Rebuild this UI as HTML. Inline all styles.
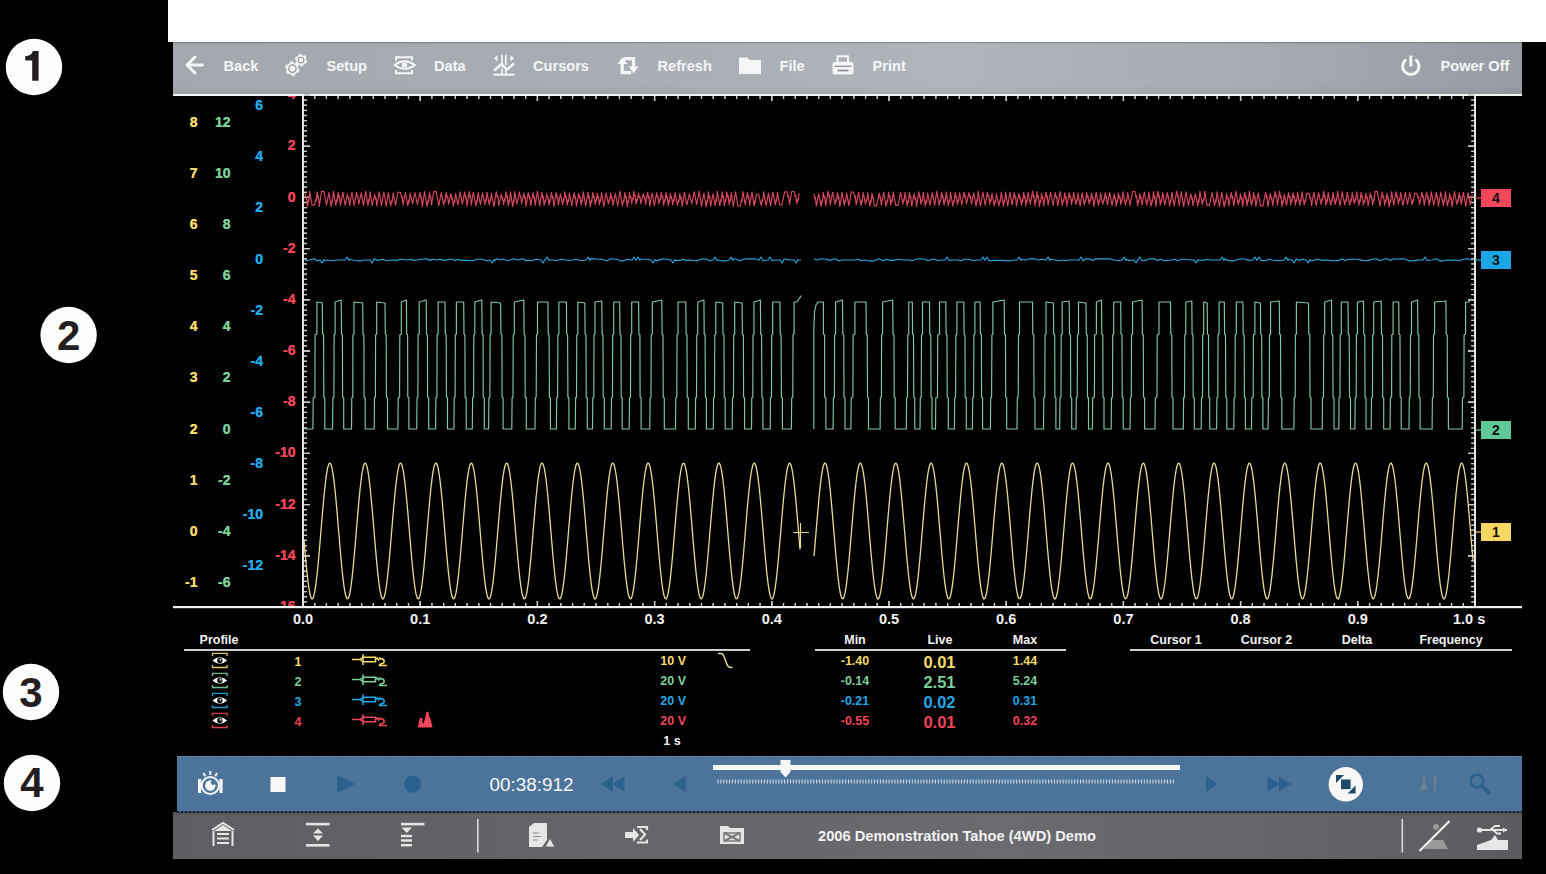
<!DOCTYPE html>
<html><head><meta charset="utf-8"><title>Scope</title>
<style>
html,body{margin:0;padding:0;background:#000;}
body{width:1546px;height:874px;overflow:hidden;position:relative;font-family:"Liberation Sans",sans-serif;}
.a{position:absolute;}
svg{position:absolute;left:0;top:0;}
</style></head><body>
<div class="a" style="left:168px;top:0;width:1378px;height:42px;background:#fff"></div>
<div class="a" style="left:173px;top:42px;width:1349px;height:52px;background:linear-gradient(180deg,rgba(40,44,50,.35) 0,rgba(40,44,50,0) 2px,rgba(40,44,50,0) 44px,rgba(40,44,50,.08) 100%),linear-gradient(90deg,#a3a8af 0%,#a8adb4 30%,#b0b5bc 58%,#a7acb3 80%,#979ca4 100%)"></div>
<div class="a" style="left:173px;top:94px;width:1349px;height:2px;background:#f4f4f4"></div>
<div class="a" style="left:177px;top:756px;width:1345px;height:56px;background:#4c7399"></div>
<div class="a" style="left:177px;top:756px;width:1345px;height:1px;background:repeating-linear-gradient(90deg,rgba(190,205,222,.4) 0 1.5px,rgba(190,205,222,0) 1.5px 3px)"></div>
<div class="a" style="left:173px;top:812px;width:1349px;height:46.5px;background:linear-gradient(180deg,rgba(20,20,30,.25) 0,rgba(20,20,30,0) 3px),linear-gradient(90deg,#5d5e62 0%,#646569 30%,#6a6b6f 62%,#636468 85%,#5a5b5f 100%)"></div>
<svg width="1546" height="874" viewBox="0 0 1546 874">
<defs><clipPath id="cp"><rect x="173" y="96" width="1349" height="510"/></clipPath><clipPath id="cp2"><rect x="304" y="96" width="1170" height="510"/></clipPath></defs><g clip-path="url(#cp)" font-family='"Liberation Sans", sans-serif'><text x="197.5" y="126.7" fill="#f6dc6a" font-size="14" font-weight="bold" text-anchor="end">8</text><text x="230.5" y="126.7" fill="#7ccf9a" font-size="14" font-weight="bold" text-anchor="end">12</text><text x="197.5" y="177.8" fill="#f6dc6a" font-size="14" font-weight="bold" text-anchor="end">7</text><text x="230.5" y="177.8" fill="#7ccf9a" font-size="14" font-weight="bold" text-anchor="end">10</text><text x="197.5" y="229" fill="#f6dc6a" font-size="14" font-weight="bold" text-anchor="end">6</text><text x="230.5" y="229" fill="#7ccf9a" font-size="14" font-weight="bold" text-anchor="end">8</text><text x="197.5" y="280.1" fill="#f6dc6a" font-size="14" font-weight="bold" text-anchor="end">5</text><text x="230.5" y="280.1" fill="#7ccf9a" font-size="14" font-weight="bold" text-anchor="end">6</text><text x="197.5" y="331.3" fill="#f6dc6a" font-size="14" font-weight="bold" text-anchor="end">4</text><text x="230.5" y="331.3" fill="#7ccf9a" font-size="14" font-weight="bold" text-anchor="end">4</text><text x="197.5" y="382.4" fill="#f6dc6a" font-size="14" font-weight="bold" text-anchor="end">3</text><text x="230.5" y="382.4" fill="#7ccf9a" font-size="14" font-weight="bold" text-anchor="end">2</text><text x="197.5" y="433.6" fill="#f6dc6a" font-size="14" font-weight="bold" text-anchor="end">2</text><text x="230.5" y="433.6" fill="#7ccf9a" font-size="14" font-weight="bold" text-anchor="end">0</text><text x="197.5" y="484.8" fill="#f6dc6a" font-size="14" font-weight="bold" text-anchor="end">1</text><text x="230.5" y="484.8" fill="#7ccf9a" font-size="14" font-weight="bold" text-anchor="end">-2</text><text x="197.5" y="535.9" fill="#f6dc6a" font-size="14" font-weight="bold" text-anchor="end">0</text><text x="230.5" y="535.9" fill="#7ccf9a" font-size="14" font-weight="bold" text-anchor="end">-4</text><text x="197.5" y="587" fill="#f6dc6a" font-size="14" font-weight="bold" text-anchor="end">-1</text><text x="230.5" y="587" fill="#7ccf9a" font-size="14" font-weight="bold" text-anchor="end">-6</text><text x="263" y="110.1" fill="#22a9e6" font-size="14" font-weight="bold" text-anchor="end">6</text><text x="263" y="161.2" fill="#22a9e6" font-size="14" font-weight="bold" text-anchor="end">4</text><text x="263" y="212.4" fill="#22a9e6" font-size="14" font-weight="bold" text-anchor="end">2</text><text x="263" y="263.5" fill="#22a9e6" font-size="14" font-weight="bold" text-anchor="end">0</text><text x="263" y="314.7" fill="#22a9e6" font-size="14" font-weight="bold" text-anchor="end">-2</text><text x="263" y="365.9" fill="#22a9e6" font-size="14" font-weight="bold" text-anchor="end">-4</text><text x="263" y="417" fill="#22a9e6" font-size="14" font-weight="bold" text-anchor="end">-6</text><text x="263" y="468.1" fill="#22a9e6" font-size="14" font-weight="bold" text-anchor="end">-8</text><text x="263" y="519.3" fill="#22a9e6" font-size="14" font-weight="bold" text-anchor="end">-10</text><text x="263" y="570.4" fill="#22a9e6" font-size="14" font-weight="bold" text-anchor="end">-12</text><text x="295.5" y="99.3" fill="#f0455a" font-size="14" font-weight="bold" text-anchor="end">4</text><text x="295.5" y="150.4" fill="#f0455a" font-size="14" font-weight="bold" text-anchor="end">2</text><text x="295.5" y="201.6" fill="#f0455a" font-size="14" font-weight="bold" text-anchor="end">0</text><text x="295.5" y="252.8" fill="#f0455a" font-size="14" font-weight="bold" text-anchor="end">-2</text><text x="295.5" y="303.9" fill="#f0455a" font-size="14" font-weight="bold" text-anchor="end">-4</text><text x="295.5" y="355.1" fill="#f0455a" font-size="14" font-weight="bold" text-anchor="end">-6</text><text x="295.5" y="406.2" fill="#f0455a" font-size="14" font-weight="bold" text-anchor="end">-8</text><text x="295.5" y="457.4" fill="#f0455a" font-size="14" font-weight="bold" text-anchor="end">-10</text><text x="295.5" y="508.5" fill="#f0455a" font-size="14" font-weight="bold" text-anchor="end">-12</text><text x="295.5" y="559.6" fill="#f0455a" font-size="14" font-weight="bold" text-anchor="end">-14</text><text x="295.5" y="610.8" fill="#f0455a" font-size="14" font-weight="bold" text-anchor="end">-16</text></g><path d="M304.0 100.12h3M304.0 105.24h3M304.0 110.36h3M304.0 115.48h3M304.0 120.60h3M304.0 125.72h3M304.0 130.84h3M304.0 135.96h3M304.0 141.08h3M304.0 151.32h3M304.0 156.44h3M304.0 161.56h3M304.0 166.68h3M304.0 171.80h3M304.0 176.92h3M304.0 182.04h3M304.0 187.16h3M304.0 192.28h3M304.0 202.52h3M304.0 207.64h3M304.0 212.76h3M304.0 217.88h3M304.0 223.00h3M304.0 228.12h3M304.0 233.24h3M304.0 238.36h3M304.0 243.48h3M304.0 253.72h3M304.0 258.84h3M304.0 263.96h3M304.0 269.08h3M304.0 274.20h3M304.0 279.32h3M304.0 284.44h3M304.0 289.56h3M304.0 294.68h3M304.0 304.92h3M304.0 310.04h3M304.0 315.16h3M304.0 320.28h3M304.0 325.40h3M304.0 330.52h3M304.0 335.64h3M304.0 340.76h3M304.0 345.88h3M304.0 356.12h3M304.0 361.24h3M304.0 366.36h3M304.0 371.48h3M304.0 376.60h3M304.0 381.72h3M304.0 386.84h3M304.0 391.96h3M304.0 397.08h3M304.0 407.32h3M304.0 412.44h3M304.0 417.56h3M304.0 422.68h3M304.0 427.80h3M304.0 432.92h3M304.0 438.04h3M304.0 443.16h3M304.0 448.28h3M304.0 458.52h3M304.0 463.64h3M304.0 468.76h3M304.0 473.88h3M304.0 479.00h3M304.0 484.12h3M304.0 489.24h3M304.0 494.36h3M304.0 499.48h3M304.0 509.72h3M304.0 514.84h3M304.0 519.96h3M304.0 525.08h3M304.0 530.20h3M304.0 535.32h3M304.0 540.44h3M304.0 545.56h3M304.0 550.68h3M304.0 560.92h3M304.0 566.04h3M304.0 571.16h3M304.0 576.28h3M304.0 581.40h3M304.0 586.52h3M304.0 591.64h3M304.0 596.76h3M304.0 601.88h3M314.72 96.0v3M314.72 606.0v-3M326.44 96.0v3M326.44 606.0v-3M338.16 96.0v3M338.16 606.0v-3M349.88 96.0v3M349.88 606.0v-3M361.60 96.0v3M361.60 606.0v-3M373.32 96.0v3M373.32 606.0v-3M385.04 96.0v3M385.04 606.0v-3M396.76 96.0v3M396.76 606.0v-3M408.48 96.0v3M408.48 606.0v-3M431.92 96.0v3M431.92 606.0v-3M443.64 96.0v3M443.64 606.0v-3M455.36 96.0v3M455.36 606.0v-3M467.08 96.0v3M467.08 606.0v-3M478.80 96.0v3M478.80 606.0v-3M490.52 96.0v3M490.52 606.0v-3M502.24 96.0v3M502.24 606.0v-3M513.96 96.0v3M513.96 606.0v-3M525.68 96.0v3M525.68 606.0v-3M549.12 96.0v3M549.12 606.0v-3M560.84 96.0v3M560.84 606.0v-3M572.56 96.0v3M572.56 606.0v-3M584.28 96.0v3M584.28 606.0v-3M596.00 96.0v3M596.00 606.0v-3M607.72 96.0v3M607.72 606.0v-3M619.44 96.0v3M619.44 606.0v-3M631.16 96.0v3M631.16 606.0v-3M642.88 96.0v3M642.88 606.0v-3M666.32 96.0v3M666.32 606.0v-3M678.04 96.0v3M678.04 606.0v-3M689.76 96.0v3M689.76 606.0v-3M701.48 96.0v3M701.48 606.0v-3M713.20 96.0v3M713.20 606.0v-3M724.92 96.0v3M724.92 606.0v-3M736.64 96.0v3M736.64 606.0v-3M748.36 96.0v3M748.36 606.0v-3M760.08 96.0v3M760.08 606.0v-3M783.52 96.0v3M783.52 606.0v-3M795.24 96.0v3M795.24 606.0v-3M806.96 96.0v3M806.96 606.0v-3M818.68 96.0v3M818.68 606.0v-3M830.40 96.0v3M830.40 606.0v-3M842.12 96.0v3M842.12 606.0v-3M853.84 96.0v3M853.84 606.0v-3M865.56 96.0v3M865.56 606.0v-3M877.28 96.0v3M877.28 606.0v-3M900.72 96.0v3M900.72 606.0v-3M912.44 96.0v3M912.44 606.0v-3M924.16 96.0v3M924.16 606.0v-3M935.88 96.0v3M935.88 606.0v-3M947.60 96.0v3M947.60 606.0v-3M959.32 96.0v3M959.32 606.0v-3M971.04 96.0v3M971.04 606.0v-3M982.76 96.0v3M982.76 606.0v-3M994.48 96.0v3M994.48 606.0v-3M1017.92 96.0v3M1017.92 606.0v-3M1029.64 96.0v3M1029.64 606.0v-3M1041.36 96.0v3M1041.36 606.0v-3M1053.08 96.0v3M1053.08 606.0v-3M1064.80 96.0v3M1064.80 606.0v-3M1076.52 96.0v3M1076.52 606.0v-3M1088.24 96.0v3M1088.24 606.0v-3M1099.96 96.0v3M1099.96 606.0v-3M1111.68 96.0v3M1111.68 606.0v-3M1135.12 96.0v3M1135.12 606.0v-3M1146.84 96.0v3M1146.84 606.0v-3M1158.56 96.0v3M1158.56 606.0v-3M1170.28 96.0v3M1170.28 606.0v-3M1182.00 96.0v3M1182.00 606.0v-3M1193.72 96.0v3M1193.72 606.0v-3M1205.44 96.0v3M1205.44 606.0v-3M1217.16 96.0v3M1217.16 606.0v-3M1228.88 96.0v3M1228.88 606.0v-3M1252.32 96.0v3M1252.32 606.0v-3M1264.04 96.0v3M1264.04 606.0v-3M1275.76 96.0v3M1275.76 606.0v-3M1287.48 96.0v3M1287.48 606.0v-3M1299.20 96.0v3M1299.20 606.0v-3M1310.92 96.0v3M1310.92 606.0v-3M1322.64 96.0v3M1322.64 606.0v-3M1334.36 96.0v3M1334.36 606.0v-3M1346.08 96.0v3M1346.08 606.0v-3M1369.52 96.0v3M1369.52 606.0v-3M1381.24 96.0v3M1381.24 606.0v-3M1392.96 96.0v3M1392.96 606.0v-3M1404.68 96.0v3M1404.68 606.0v-3M1416.40 96.0v3M1416.40 606.0v-3M1428.12 96.0v3M1428.12 606.0v-3M1439.84 96.0v3M1439.84 606.0v-3M1451.56 96.0v3M1451.56 606.0v-3M1463.28 96.0v3M1463.28 606.0v-3" stroke="#9a9a9a" stroke-width="1.15" fill="none"/><path d="M304.0 95.00h6M1474.0 95.00h-6M304.0 146.20h6M1474.0 146.20h-6M304.0 197.40h6M1474.0 197.40h-6M304.0 248.60h6M1474.0 248.60h-6M304.0 299.80h6M1474.0 299.80h-6M304.0 351.00h6M1474.0 351.00h-6M304.0 402.20h6M1474.0 402.20h-6M304.0 453.40h6M1474.0 453.40h-6M304.0 504.60h6M1474.0 504.60h-6M304.0 555.80h6M1474.0 555.80h-6M304.0 607.00h6M1474.0 607.00h-6M303.00 96.0v5M303.00 606.0v-5M420.20 96.0v5M420.20 606.0v-5M537.40 96.0v5M537.40 606.0v-5M654.60 96.0v5M654.60 606.0v-5M771.80 96.0v5M771.80 606.0v-5M889.00 96.0v5M889.00 606.0v-5M1006.20 96.0v5M1006.20 606.0v-5M1123.40 96.0v5M1123.40 606.0v-5M1240.60 96.0v5M1240.60 606.0v-5M1357.80 96.0v5M1357.80 606.0v-5M1475.00 96.0v5M1475.00 606.0v-5" stroke="#d8d8d8" stroke-width="1.4" fill="none"/><path d="M1474.0 100.12h-2.2M1474.0 105.24h-2.2M1474.0 110.36h-2.2M1474.0 115.48h-2.2M1474.0 120.60h-2.2M1474.0 125.72h-2.2M1474.0 130.84h-2.2M1474.0 135.96h-2.2M1474.0 141.08h-2.2M1474.0 151.32h-2.2M1474.0 156.44h-2.2M1474.0 161.56h-2.2M1474.0 166.68h-2.2M1474.0 171.80h-2.2M1474.0 176.92h-2.2M1474.0 182.04h-2.2M1474.0 187.16h-2.2M1474.0 192.28h-2.2M1474.0 202.52h-2.2M1474.0 207.64h-2.2M1474.0 212.76h-2.2M1474.0 217.88h-2.2M1474.0 223.00h-2.2M1474.0 228.12h-2.2M1474.0 233.24h-2.2M1474.0 238.36h-2.2M1474.0 243.48h-2.2M1474.0 253.72h-2.2M1474.0 258.84h-2.2M1474.0 263.96h-2.2M1474.0 269.08h-2.2M1474.0 274.20h-2.2M1474.0 279.32h-2.2M1474.0 284.44h-2.2M1474.0 289.56h-2.2M1474.0 294.68h-2.2M1474.0 304.92h-2.2M1474.0 310.04h-2.2M1474.0 315.16h-2.2M1474.0 320.28h-2.2M1474.0 325.40h-2.2M1474.0 330.52h-2.2M1474.0 335.64h-2.2M1474.0 340.76h-2.2M1474.0 345.88h-2.2M1474.0 356.12h-2.2M1474.0 361.24h-2.2M1474.0 366.36h-2.2M1474.0 371.48h-2.2M1474.0 376.60h-2.2M1474.0 381.72h-2.2M1474.0 386.84h-2.2M1474.0 391.96h-2.2M1474.0 397.08h-2.2M1474.0 407.32h-2.2M1474.0 412.44h-2.2M1474.0 417.56h-2.2M1474.0 422.68h-2.2M1474.0 427.80h-2.2M1474.0 432.92h-2.2M1474.0 438.04h-2.2M1474.0 443.16h-2.2M1474.0 448.28h-2.2M1474.0 458.52h-2.2M1474.0 463.64h-2.2M1474.0 468.76h-2.2M1474.0 473.88h-2.2M1474.0 479.00h-2.2M1474.0 484.12h-2.2M1474.0 489.24h-2.2M1474.0 494.36h-2.2M1474.0 499.48h-2.2M1474.0 509.72h-2.2M1474.0 514.84h-2.2M1474.0 519.96h-2.2M1474.0 525.08h-2.2M1474.0 530.20h-2.2M1474.0 535.32h-2.2M1474.0 540.44h-2.2M1474.0 545.56h-2.2M1474.0 550.68h-2.2M1474.0 560.92h-2.2M1474.0 566.04h-2.2M1474.0 571.16h-2.2M1474.0 576.28h-2.2M1474.0 581.40h-2.2M1474.0 586.52h-2.2M1474.0 591.64h-2.2M1474.0 596.76h-2.2M1474.0 601.88h-2.2" stroke="#8a8a8a" stroke-width="1.1" fill="none"/><defs><clipPath id="cp"><rect x="173" y="96" width="1349" height="510"/></clipPath><clipPath id="cp2"><rect x="304" y="96" width="1170" height="510"/></clipPath></defs><g clip-path="url(#cp)" font-family='"Liberation Sans", sans-serif'><text x="197.5" y="126.7" fill="#f6dc6a" font-size="14" font-weight="bold" text-anchor="end">8</text><text x="230.5" y="126.7" fill="#7ccf9a" font-size="14" font-weight="bold" text-anchor="end">12</text><text x="197.5" y="177.8" fill="#f6dc6a" font-size="14" font-weight="bold" text-anchor="end">7</text><text x="230.5" y="177.8" fill="#7ccf9a" font-size="14" font-weight="bold" text-anchor="end">10</text><text x="197.5" y="229" fill="#f6dc6a" font-size="14" font-weight="bold" text-anchor="end">6</text><text x="230.5" y="229" fill="#7ccf9a" font-size="14" font-weight="bold" text-anchor="end">8</text><text x="197.5" y="280.1" fill="#f6dc6a" font-size="14" font-weight="bold" text-anchor="end">5</text><text x="230.5" y="280.1" fill="#7ccf9a" font-size="14" font-weight="bold" text-anchor="end">6</text><text x="197.5" y="331.3" fill="#f6dc6a" font-size="14" font-weight="bold" text-anchor="end">4</text><text x="230.5" y="331.3" fill="#7ccf9a" font-size="14" font-weight="bold" text-anchor="end">4</text><text x="197.5" y="382.4" fill="#f6dc6a" font-size="14" font-weight="bold" text-anchor="end">3</text><text x="230.5" y="382.4" fill="#7ccf9a" font-size="14" font-weight="bold" text-anchor="end">2</text><text x="197.5" y="433.6" fill="#f6dc6a" font-size="14" font-weight="bold" text-anchor="end">2</text><text x="230.5" y="433.6" fill="#7ccf9a" font-size="14" font-weight="bold" text-anchor="end">0</text><text x="197.5" y="484.8" fill="#f6dc6a" font-size="14" font-weight="bold" text-anchor="end">1</text><text x="230.5" y="484.8" fill="#7ccf9a" font-size="14" font-weight="bold" text-anchor="end">-2</text><text x="197.5" y="535.9" fill="#f6dc6a" font-size="14" font-weight="bold" text-anchor="end">0</text><text x="230.5" y="535.9" fill="#7ccf9a" font-size="14" font-weight="bold" text-anchor="end">-4</text><text x="197.5" y="587" fill="#f6dc6a" font-size="14" font-weight="bold" text-anchor="end">-1</text><text x="230.5" y="587" fill="#7ccf9a" font-size="14" font-weight="bold" text-anchor="end">-6</text><text x="263" y="110.1" fill="#22a9e6" font-size="14" font-weight="bold" text-anchor="end">6</text><text x="263" y="161.2" fill="#22a9e6" font-size="14" font-weight="bold" text-anchor="end">4</text><text x="263" y="212.4" fill="#22a9e6" font-size="14" font-weight="bold" text-anchor="end">2</text><text x="263" y="263.5" fill="#22a9e6" font-size="14" font-weight="bold" text-anchor="end">0</text><text x="263" y="314.7" fill="#22a9e6" font-size="14" font-weight="bold" text-anchor="end">-2</text><text x="263" y="365.9" fill="#22a9e6" font-size="14" font-weight="bold" text-anchor="end">-4</text><text x="263" y="417" fill="#22a9e6" font-size="14" font-weight="bold" text-anchor="end">-6</text><text x="263" y="468.1" fill="#22a9e6" font-size="14" font-weight="bold" text-anchor="end">-8</text><text x="263" y="519.3" fill="#22a9e6" font-size="14" font-weight="bold" text-anchor="end">-10</text><text x="263" y="570.4" fill="#22a9e6" font-size="14" font-weight="bold" text-anchor="end">-12</text><text x="295.5" y="99.3" fill="#f0455a" font-size="14" font-weight="bold" text-anchor="end">4</text><text x="295.5" y="150.4" fill="#f0455a" font-size="14" font-weight="bold" text-anchor="end">2</text><text x="295.5" y="201.6" fill="#f0455a" font-size="14" font-weight="bold" text-anchor="end">0</text><text x="295.5" y="252.8" fill="#f0455a" font-size="14" font-weight="bold" text-anchor="end">-2</text><text x="295.5" y="303.9" fill="#f0455a" font-size="14" font-weight="bold" text-anchor="end">-4</text><text x="295.5" y="355.1" fill="#f0455a" font-size="14" font-weight="bold" text-anchor="end">-6</text><text x="295.5" y="406.2" fill="#f0455a" font-size="14" font-weight="bold" text-anchor="end">-8</text><text x="295.5" y="457.4" fill="#f0455a" font-size="14" font-weight="bold" text-anchor="end">-10</text><text x="295.5" y="508.5" fill="#f0455a" font-size="14" font-weight="bold" text-anchor="end">-12</text><text x="295.5" y="559.6" fill="#f0455a" font-size="14" font-weight="bold" text-anchor="end">-14</text><text x="295.5" y="610.8" fill="#f0455a" font-size="14" font-weight="bold" text-anchor="end">-16</text></g><path d="M304.0 95.00h6M304.0 100.12h3M304.0 105.24h3M304.0 110.36h3M304.0 115.48h3M304.0 120.60h3M304.0 125.72h3M304.0 130.84h3M304.0 135.96h3M304.0 141.08h3M304.0 146.20h6M304.0 151.32h3M304.0 156.44h3M304.0 161.56h3M304.0 166.68h3M304.0 171.80h3M304.0 176.92h3M304.0 182.04h3M304.0 187.16h3M304.0 192.28h3M304.0 197.40h6M304.0 202.52h3M304.0 207.64h3M304.0 212.76h3M304.0 217.88h3M304.0 223.00h3M304.0 228.12h3M304.0 233.24h3M304.0 238.36h3M304.0 243.48h3M304.0 248.60h6M304.0 253.72h3M304.0 258.84h3M304.0 263.96h3M304.0 269.08h3M304.0 274.20h3M304.0 279.32h3M304.0 284.44h3M304.0 289.56h3M304.0 294.68h3M304.0 299.80h6M304.0 304.92h3M304.0 310.04h3M304.0 315.16h3M304.0 320.28h3M304.0 325.40h3M304.0 330.52h3M304.0 335.64h3M304.0 340.76h3M304.0 345.88h3M304.0 351.00h6M304.0 356.12h3M304.0 361.24h3M304.0 366.36h3M304.0 371.48h3M304.0 376.60h3M304.0 381.72h3M304.0 386.84h3M304.0 391.96h3M304.0 397.08h3M304.0 402.20h6M304.0 407.32h3M304.0 412.44h3M304.0 417.56h3M304.0 422.68h3M304.0 427.80h3M304.0 432.92h3M304.0 438.04h3M304.0 443.16h3M304.0 448.28h3M304.0 453.40h6M304.0 458.52h3M304.0 463.64h3M304.0 468.76h3M304.0 473.88h3M304.0 479.00h3M304.0 484.12h3M304.0 489.24h3M304.0 494.36h3M304.0 499.48h3M304.0 504.60h6M304.0 509.72h3M304.0 514.84h3M304.0 519.96h3M304.0 525.08h3M304.0 530.20h3M304.0 535.32h3M304.0 540.44h3M304.0 545.56h3M304.0 550.68h3M304.0 555.80h6M304.0 560.92h3M304.0 566.04h3M304.0 571.16h3M304.0 576.28h3M304.0 581.40h3M304.0 586.52h3M304.0 591.64h3M304.0 596.76h3M304.0 601.88h3M304.0 607.00h6M1474.0 95.00h-6M1474.0 100.12h-3M1474.0 105.24h-3M1474.0 110.36h-3M1474.0 115.48h-3M1474.0 120.60h-3M1474.0 125.72h-3M1474.0 130.84h-3M1474.0 135.96h-3M1474.0 141.08h-3M1474.0 146.20h-6M1474.0 151.32h-3M1474.0 156.44h-3M1474.0 161.56h-3M1474.0 166.68h-3M1474.0 171.80h-3M1474.0 176.92h-3M1474.0 182.04h-3M1474.0 187.16h-3M1474.0 192.28h-3M1474.0 197.40h-6M1474.0 202.52h-3M1474.0 207.64h-3M1474.0 212.76h-3M1474.0 217.88h-3M1474.0 223.00h-3M1474.0 228.12h-3M1474.0 233.24h-3M1474.0 238.36h-3M1474.0 243.48h-3M1474.0 248.60h-6M1474.0 253.72h-3M1474.0 258.84h-3M1474.0 263.96h-3M1474.0 269.08h-3M1474.0 274.20h-3M1474.0 279.32h-3M1474.0 284.44h-3M1474.0 289.56h-3M1474.0 294.68h-3M1474.0 299.80h-6M1474.0 304.92h-3M1474.0 310.04h-3M1474.0 315.16h-3M1474.0 320.28h-3M1474.0 325.40h-3M1474.0 330.52h-3M1474.0 335.64h-3M1474.0 340.76h-3M1474.0 345.88h-3M1474.0 351.00h-6M1474.0 356.12h-3M1474.0 361.24h-3M1474.0 366.36h-3M1474.0 371.48h-3M1474.0 376.60h-3M1474.0 381.72h-3M1474.0 386.84h-3M1474.0 391.96h-3M1474.0 397.08h-3M1474.0 402.20h-6M1474.0 407.32h-3M1474.0 412.44h-3M1474.0 417.56h-3M1474.0 422.68h-3M1474.0 427.80h-3M1474.0 432.92h-3M1474.0 438.04h-3M1474.0 443.16h-3M1474.0 448.28h-3M1474.0 453.40h-6M1474.0 458.52h-3M1474.0 463.64h-3M1474.0 468.76h-3M1474.0 473.88h-3M1474.0 479.00h-3M1474.0 484.12h-3M1474.0 489.24h-3M1474.0 494.36h-3M1474.0 499.48h-3M1474.0 504.60h-6M1474.0 509.72h-3M1474.0 514.84h-3M1474.0 519.96h-3M1474.0 525.08h-3M1474.0 530.20h-3M1474.0 535.32h-3M1474.0 540.44h-3M1474.0 545.56h-3M1474.0 550.68h-3M1474.0 555.80h-6M1474.0 560.92h-3M1474.0 566.04h-3M1474.0 571.16h-3M1474.0 576.28h-3M1474.0 581.40h-3M1474.0 586.52h-3M1474.0 591.64h-3M1474.0 596.76h-3M1474.0 601.88h-3M1474.0 607.00h-6M303.00 96.0v5M303.00 606.0v-5M314.72 96.0v3M314.72 606.0v-3M326.44 96.0v3M326.44 606.0v-3M338.16 96.0v3M338.16 606.0v-3M349.88 96.0v3M349.88 606.0v-3M361.60 96.0v3M361.60 606.0v-3M373.32 96.0v3M373.32 606.0v-3M385.04 96.0v3M385.04 606.0v-3M396.76 96.0v3M396.76 606.0v-3M408.48 96.0v3M408.48 606.0v-3M420.20 96.0v5M420.20 606.0v-5M431.92 96.0v3M431.92 606.0v-3M443.64 96.0v3M443.64 606.0v-3M455.36 96.0v3M455.36 606.0v-3M467.08 96.0v3M467.08 606.0v-3M478.80 96.0v3M478.80 606.0v-3M490.52 96.0v3M490.52 606.0v-3M502.24 96.0v3M502.24 606.0v-3M513.96 96.0v3M513.96 606.0v-3M525.68 96.0v3M525.68 606.0v-3M537.40 96.0v5M537.40 606.0v-5M549.12 96.0v3M549.12 606.0v-3M560.84 96.0v3M560.84 606.0v-3M572.56 96.0v3M572.56 606.0v-3M584.28 96.0v3M584.28 606.0v-3M596.00 96.0v3M596.00 606.0v-3M607.72 96.0v3M607.72 606.0v-3M619.44 96.0v3M619.44 606.0v-3M631.16 96.0v3M631.16 606.0v-3M642.88 96.0v3M642.88 606.0v-3M654.60 96.0v5M654.60 606.0v-5M666.32 96.0v3M666.32 606.0v-3M678.04 96.0v3M678.04 606.0v-3M689.76 96.0v3M689.76 606.0v-3M701.48 96.0v3M701.48 606.0v-3M713.20 96.0v3M713.20 606.0v-3M724.92 96.0v3M724.92 606.0v-3M736.64 96.0v3M736.64 606.0v-3M748.36 96.0v3M748.36 606.0v-3M760.08 96.0v3M760.08 606.0v-3M771.80 96.0v5M771.80 606.0v-5M783.52 96.0v3M783.52 606.0v-3M795.24 96.0v3M795.24 606.0v-3M806.96 96.0v3M806.96 606.0v-3M818.68 96.0v3M818.68 606.0v-3M830.40 96.0v3M830.40 606.0v-3M842.12 96.0v3M842.12 606.0v-3M853.84 96.0v3M853.84 606.0v-3M865.56 96.0v3M865.56 606.0v-3M877.28 96.0v3M877.28 606.0v-3M889.00 96.0v5M889.00 606.0v-5M900.72 96.0v3M900.72 606.0v-3M912.44 96.0v3M912.44 606.0v-3M924.16 96.0v3M924.16 606.0v-3M935.88 96.0v3M935.88 606.0v-3M947.60 96.0v3M947.60 606.0v-3M959.32 96.0v3M959.32 606.0v-3M971.04 96.0v3M971.04 606.0v-3M982.76 96.0v3M982.76 606.0v-3M994.48 96.0v3M994.48 606.0v-3M1006.20 96.0v5M1006.20 606.0v-5M1017.92 96.0v3M1017.92 606.0v-3M1029.64 96.0v3M1029.64 606.0v-3M1041.36 96.0v3M1041.36 606.0v-3M1053.08 96.0v3M1053.08 606.0v-3M1064.80 96.0v3M1064.80 606.0v-3M1076.52 96.0v3M1076.52 606.0v-3M1088.24 96.0v3M1088.24 606.0v-3M1099.96 96.0v3M1099.96 606.0v-3M1111.68 96.0v3M1111.68 606.0v-3M1123.40 96.0v5M1123.40 606.0v-5M1135.12 96.0v3M1135.12 606.0v-3M1146.84 96.0v3M1146.84 606.0v-3M1158.56 96.0v3M1158.56 606.0v-3M1170.28 96.0v3M1170.28 606.0v-3M1182.00 96.0v3M1182.00 606.0v-3M1193.72 96.0v3M1193.72 606.0v-3M1205.44 96.0v3M1205.44 606.0v-3M1217.16 96.0v3M1217.16 606.0v-3M1228.88 96.0v3M1228.88 606.0v-3M1240.60 96.0v5M1240.60 606.0v-5M1252.32 96.0v3M1252.32 606.0v-3M1264.04 96.0v3M1264.04 606.0v-3M1275.76 96.0v3M1275.76 606.0v-3M1287.48 96.0v3M1287.48 606.0v-3M1299.20 96.0v3M1299.20 606.0v-3M1310.92 96.0v3M1310.92 606.0v-3M1322.64 96.0v3M1322.64 606.0v-3M1334.36 96.0v3M1334.36 606.0v-3M1346.08 96.0v3M1346.08 606.0v-3M1357.80 96.0v5M1357.80 606.0v-5M1369.52 96.0v3M1369.52 606.0v-3M1381.24 96.0v3M1381.24 606.0v-3M1392.96 96.0v3M1392.96 606.0v-3M1404.68 96.0v3M1404.68 606.0v-3M1416.40 96.0v3M1416.40 606.0v-3M1428.12 96.0v3M1428.12 606.0v-3M1439.84 96.0v3M1439.84 606.0v-3M1451.56 96.0v3M1451.56 606.0v-3M1463.28 96.0v3M1463.28 606.0v-3M1475.00 96.0v5M1475.00 606.0v-5" stroke="#c8c8c8" stroke-width="1.3" fill="none"/><rect x="302" y="95" width="2" height="512" fill="#e6e6e6"/><rect x="1474" y="95" width="2" height="512" fill="#e6e6e6"/><g clip-path="url(#cp2)"><path d="M305.0 193.1 306.1 199.2 306.5 197.2 307.5 206.7 308.5 199.7 308.9 202.1 309.8 191.3 312.1 205.1 313.3 205.1 314.5 205.1 315.7 199.1 316.1 201.1 317.1 191.9 318.1 198.4 318.4 196.2 319.3 206.4 321.5 191.4 322.7 191.4 323.9 191.4 326.5 205.0 328.9 192.7 331.2 206.7 332.2 199.7 332.5 202.1 333.4 191.2 335.8 205.2 336.8 199.4 337.2 201.4 338.1 192.3 339.2 198.2 339.5 196.2 340.5 205.3 342.8 192.1 345.2 205.3 347.4 194.0 348.4 199.2 348.8 197.4 349.7 205.4 351.9 192.0 354.1 205.6 356.5 192.4 357.5 197.7 357.9 196.0 358.8 204.3 361.3 192.8 363.4 205.4 365.7 191.3 367.9 205.1 368.9 199.1 369.2 201.1 370.1 191.9 372.2 205.5 374.7 194.2 375.6 199.5 376.0 197.7 376.8 205.9 379.2 191.9 381.5 205.7 383.9 192.0 386.2 206.2 388.3 192.6 390.7 206.0 391.8 200.1 392.2 202.0 393.2 192.9 395.6 205.5 398.0 192.2 399.2 192.2 400.4 192.2 401.6 198.0 402.0 196.0 403.0 204.9 405.4 192.5 407.8 205.8 408.8 200.1 409.2 202.0 410.1 193.1 412.5 203.9 414.9 192.5 417.4 204.5 419.9 192.7 421.0 199.0 421.3 196.9 422.3 206.8 424.6 191.5 427.1 206.3 428.1 199.9 428.5 202.1 429.4 192.2 430.3 197.9 430.7 196.0 431.5 204.9 433.8 191.6 435.0 191.6 436.2 191.6 438.8 205.7 441.3 192.6 443.7 205.2 444.8 199.5 445.1 201.4 446.1 192.5 447.2 197.8 447.6 196.0 448.6 204.3 450.9 193.7 452.0 199.3 452.3 197.5 453.3 206.1 454.3 200.5 454.7 202.4 455.6 193.6 457.9 204.9 460.1 191.8 462.4 204.1 464.6 192.2 465.7 198.4 466.0 196.3 467.0 206.0 469.2 191.7 470.1 197.7 470.5 195.7 471.3 205.1 473.4 192.0 475.8 206.0 476.8 200.0 477.2 202.0 478.1 192.6 480.5 204.8 482.6 192.8 484.9 204.7 485.8 199.0 486.2 200.9 487.0 192.1 489.2 204.6 490.2 199.5 490.5 201.2 491.4 193.2 493.9 206.6 496.3 191.7 497.4 197.9 497.8 195.8 498.8 205.5 501.3 194.1 502.3 198.8 502.6 197.3 503.5 204.6 504.6 198.8 504.9 200.7 505.9 191.8 507.0 198.2 507.3 196.1 508.3 205.9 509.3 199.6 509.6 201.7 510.5 191.9 512.6 206.6 513.6 199.8 513.9 202.1 514.8 191.5 516.9 204.0 519.4 192.1 520.4 197.4 520.7 195.7 521.6 203.9 523.9 193.0 524.8 199.0 525.2 197.0 526.0 206.3 528.3 192.7 529.4 198.5 529.7 196.5 530.7 205.6 533.0 192.5 534.0 198.3 534.3 196.4 535.2 205.4 537.5 191.3 539.7 205.8 541.8 192.5 542.8 198.3 543.2 196.4 544.1 205.3 545.2 200.0 545.6 201.8 546.6 193.5 547.7 198.7 548.0 197.0 549.0 205.1 550.1 199.3 550.4 201.2 551.4 192.3 552.5 198.7 552.9 196.6 553.9 206.5 556.2 192.6 557.2 198.1 557.5 196.3 558.4 204.9 560.5 193.6 562.6 205.0 563.6 199.1 563.9 201.1 564.8 191.9 565.8 198.0 566.2 196.0 567.1 205.3 568.1 199.8 568.5 201.6 569.4 193.1 571.8 205.6 574.2 192.7 575.2 198.8 575.5 196.8 576.4 206.2 578.8 193.3 579.8 198.7 580.2 196.9 581.1 205.2 582.1 199.2 582.4 201.2 583.3 191.8 585.7 205.9 588.0 192.3 589.0 198.8 589.3 196.6 590.2 206.8 591.3 200.3 591.7 202.5 592.7 192.5 593.7 197.8 594.1 196.0 595.0 204.3 596.0 199.3 596.3 200.9 597.2 193.2 598.1 198.4 598.5 196.7 599.3 204.8 600.3 199.4 600.6 201.2 601.5 192.7 603.8 206.3 606.1 193.2 608.4 203.8 609.4 199.1 609.7 200.7 610.6 193.3 611.6 198.7 612.0 196.9 612.9 205.4 615.4 193.6 617.7 206.0 619.9 191.4 622.4 206.0 623.5 199.9 623.8 201.9 624.8 192.5 625.9 198.8 626.2 196.7 627.2 206.6 628.2 200.5 628.5 202.5 629.4 192.9 630.4 197.8 630.8 196.2 631.7 203.7 632.6 198.1 633.0 200.0 633.8 191.3 634.8 197.0 635.1 195.1 636.0 203.9 637.1 199.1 637.4 200.7 638.4 193.3 639.5 198.0 639.9 196.4 640.9 203.7 643.3 193.6 644.3 198.4 644.7 196.8 645.6 204.4 647.7 192.1 648.6 198.4 649.0 196.3 649.8 206.0 652.0 193.2 654.4 205.7 656.6 192.9 657.6 197.8 657.9 196.2 658.8 203.7 659.9 198.5 660.3 200.2 661.3 192.0 662.3 198.0 662.7 196.0 663.6 205.3 664.6 199.6 665.0 201.5 665.9 192.5 666.9 198.5 667.3 196.5 668.2 205.8 669.1 200.2 669.5 202.1 670.3 193.5 671.3 198.6 671.7 196.9 672.6 204.8 673.7 199.3 674.1 201.2 675.1 192.6 677.5 205.3 678.5 199.9 678.9 201.7 679.8 193.3 680.8 199.2 681.2 197.3 682.1 206.5 684.4 192.0 686.9 204.9 689.4 193.8 691.8 203.7 694.2 191.7 696.7 204.7 699.2 191.3 701.6 206.3 703.9 193.0 706.2 206.8 707.1 200.0 707.5 202.3 708.3 191.8 709.3 198.3 709.7 196.1 710.6 206.2 713.1 193.8 715.2 205.7 716.1 199.2 716.5 201.4 717.3 191.3 719.8 205.6 720.8 199.4 721.2 201.5 722.1 191.9 723.1 198.1 723.5 196.0 724.4 205.7 725.5 199.5 725.8 201.5 726.8 191.9 727.8 197.6 728.2 195.7 729.1 204.6 730.0 199.1 730.4 201.0 731.2 192.5 733.4 206.5 735.6 191.8 737.9 206.0 739.1 206.0 740.3 206.0 741.5 199.4 741.9 201.6 742.9 191.5 745.2 204.9 747.5 192.6 748.4 198.4 748.8 196.5 749.6 205.4 752.0 191.9 754.1 205.8 755.0 200.6 755.4 202.4 756.2 194.2 757.4 194.2 758.6 194.2 761.2 205.7 762.3 199.4 762.7 201.5 763.7 191.7 766.1 205.9 768.5 193.2 770.6 205.9 772.8 192.1 775.3 204.9 776.3 199.1 776.6 201.1 777.5 192.1 779.6 204.8 780.8 204.8 782.0 204.8 784.6 191.9 785.8 191.9 787.0 191.9 788.2 197.6 788.6 195.7 789.6 204.4 791.7 191.5 792.9 191.5 794.1 191.5 795.3 197.1 795.7 195.2 796.7 203.8 797.8 199.0 798.2 200.6 799.2 193.0" stroke="#d8485e" stroke-width="1.15" fill="none" stroke-linejoin="round"/><path d="M814.0 193.6 815.0 199.2 815.4 197.3 816.3 206.1 818.8 193.5 821.0 206.3 822.0 200.1 822.4 202.1 823.3 192.4 824.4 198.5 824.7 196.5 825.7 205.8 828.1 191.2 829.1 197.3 829.4 195.3 830.3 204.8 832.6 192.2 835.0 204.4 836.1 199.2 836.4 200.9 837.4 192.7 838.5 198.9 838.8 196.8 839.8 206.4 842.1 192.0 844.2 205.4 845.3 199.8 845.6 201.7 846.6 193.1 848.9 205.6 851.2 192.0 852.4 192.0 853.6 192.0 854.8 197.9 855.2 195.9 856.2 205.0 858.5 192.2 861.0 205.6 862.0 199.7 862.3 201.6 863.2 192.4 865.5 204.1 866.5 199.0 866.8 200.7 867.7 192.7 869.8 205.9 870.8 200.2 871.1 202.1 872.0 193.2 873.0 198.9 873.3 197.0 874.2 205.9 875.4 205.9 876.6 205.9 879.2 193.0 880.1 198.5 880.5 196.7 881.3 205.2 883.7 192.1 886.1 206.5 887.2 200.0 887.6 202.2 888.6 192.1 889.6 197.9 889.9 196.0 890.8 205.0 891.9 199.2 892.3 201.1 893.3 192.1 895.6 205.3 896.8 205.3 898.0 205.3 900.6 192.4 902.9 204.1 903.8 198.8 904.2 200.5 905.0 192.3 907.2 206.2 908.1 200.0 908.5 202.1 909.3 192.3 910.4 198.4 910.7 196.4 911.7 205.9 914.1 193.8 915.2 199.6 915.6 197.6 916.6 206.7 918.8 191.9 919.8 197.6 920.1 195.7 921.0 204.5 922.0 199.0 922.3 200.9 923.2 192.3 925.3 205.9 926.3 200.1 926.7 202.1 927.6 193.1 930.0 205.2 932.2 192.6 934.7 205.3 936.8 191.4 939.1 205.3 940.2 199.5 940.6 201.4 941.6 192.4 942.7 198.1 943.0 196.2 944.0 205.2 945.0 199.2 945.3 201.2 946.2 191.8 948.3 205.9 949.3 199.8 949.6 201.8 950.5 192.3 952.8 206.2 953.9 200.0 954.2 202.1 955.2 192.4 956.1 197.9 956.5 196.1 957.3 204.6 958.3 199.3 958.7 201.1 959.6 192.9 961.8 205.0 964.0 192.2 965.1 197.4 965.5 195.7 966.5 203.8 969.0 192.7 970.1 197.8 970.5 196.1 971.5 204.1 973.7 192.8 976.0 205.9 977.0 199.4 977.3 201.6 978.2 191.4 980.4 206.2 982.9 192.4 985.3 205.3 987.4 192.1 988.4 197.5 988.8 195.7 989.7 204.2 990.7 199.3 991.1 200.9 992.0 193.4 994.3 206.2 995.2 200.6 995.6 202.5 996.4 193.7 998.9 205.9 1000.0 199.6 1000.3 201.7 1001.3 192.0 1003.4 206.1 1004.4 200.0 1004.7 202.0 1005.6 192.4 1007.7 205.8 1010.0 192.5 1012.1 204.9 1014.2 192.3 1015.2 198.4 1015.6 196.3 1016.5 205.9 1018.9 193.7 1020.0 198.9 1020.4 197.1 1021.4 205.3 1022.4 199.4 1022.8 201.4 1023.7 192.3 1024.6 198.4 1025.0 196.4 1025.8 205.9 1026.8 199.7 1027.1 201.8 1028.0 192.0 1030.3 204.4 1032.6 191.2 1033.6 197.8 1034.0 195.6 1034.9 205.8 1035.8 199.4 1036.2 201.5 1037.0 191.6 1038.1 198.2 1038.4 196.0 1039.4 206.4 1040.3 200.5 1040.7 202.4 1041.5 193.3 1042.5 199.0 1042.8 197.1 1043.7 205.9 1046.0 192.3 1046.9 198.0 1047.3 196.1 1048.1 205.1 1050.6 192.1 1053.1 205.5 1055.2 192.5 1056.3 198.5 1056.7 196.5 1057.7 205.8 1060.2 191.5 1062.3 205.2 1063.4 199.6 1063.7 201.5 1064.7 192.7 1065.6 198.6 1066.0 196.6 1066.8 205.9 1069.2 192.6 1070.2 198.0 1070.6 196.2 1071.5 204.5 1072.4 198.8 1072.8 200.7 1073.6 192.0 1075.9 204.6 1076.8 199.3 1077.2 201.0 1078.0 192.9 1080.1 206.2 1082.2 192.7 1084.3 205.0 1085.3 199.5 1085.7 201.3 1086.6 192.6 1087.7 197.8 1088.1 196.1 1089.1 204.1 1090.2 199.2 1090.5 200.8 1091.5 193.2 1092.6 199.3 1092.9 197.2 1093.9 206.7 1096.2 192.3 1098.4 205.3 1099.3 199.8 1099.7 201.6 1100.5 193.1 1102.8 204.3 1103.8 199.1 1104.2 200.8 1105.1 192.9 1106.1 198.3 1106.4 196.5 1107.3 204.9 1109.7 192.3 1112.0 205.4 1114.1 193.9 1115.0 199.4 1115.4 197.6 1116.2 206.2 1117.1 200.2 1117.5 202.2 1118.3 192.9 1119.4 198.2 1119.8 196.4 1120.8 204.6 1121.8 198.8 1122.1 200.8 1123.0 191.8 1125.3 204.9 1126.4 199.4 1126.7 201.2 1127.7 192.7 1130.1 205.4 1132.5 191.5 1133.7 191.5 1134.9 191.5 1136.1 197.9 1136.5 195.8 1137.5 205.8 1138.5 200.3 1138.8 202.1 1139.7 193.5 1140.7 198.7 1141.1 197.0 1142.0 205.0 1144.3 192.0 1146.7 205.2 1147.6 199.3 1148.0 201.3 1148.8 192.0 1151.1 206.2 1152.2 199.7 1152.5 201.9 1153.5 191.8 1154.5 198.3 1154.9 196.1 1155.8 206.3 1157.9 191.4 1159.0 197.6 1159.3 195.5 1160.3 205.2 1161.4 199.4 1161.7 201.4 1162.7 192.3 1164.8 205.2 1167.3 192.4 1168.3 198.6 1168.6 196.5 1169.5 206.1 1170.6 200.0 1170.9 202.0 1171.9 192.4 1174.2 205.8 1176.7 191.2 1177.8 197.7 1178.1 195.5 1179.1 205.6 1181.4 191.9 1183.7 206.7 1186.0 191.8 1188.5 205.5 1190.8 193.8 1191.8 199.2 1192.1 197.4 1193.0 205.7 1195.3 193.5 1197.8 206.1 1198.7 199.4 1199.1 201.6 1199.9 191.2 1202.3 204.6 1203.4 198.7 1203.8 200.7 1204.8 191.4 1207.1 205.4 1208.3 205.4 1209.5 205.4 1212.1 192.5 1214.6 205.6 1215.7 199.4 1216.1 201.5 1217.1 191.7 1219.4 206.7 1221.8 192.5 1224.3 206.8 1225.3 200.9 1225.6 202.8 1226.5 193.7 1227.6 199.2 1227.9 197.4 1228.9 206.0 1231.2 192.3 1232.3 198.4 1232.7 196.3 1233.7 205.8 1236.0 191.3 1238.2 205.0 1239.2 199.9 1239.5 201.6 1240.4 193.7 1241.4 199.4 1241.8 197.5 1242.7 206.3 1244.8 192.4 1245.7 198.4 1246.1 196.4 1246.9 205.8 1248.0 199.3 1248.4 201.5 1249.4 191.4 1251.5 205.4 1252.4 199.6 1252.8 201.5 1253.6 192.5 1254.6 198.7 1255.0 196.6 1255.9 206.4 1258.2 193.0 1260.6 205.9 1261.8 205.9 1263.0 205.9 1265.6 192.0 1266.7 198.5 1267.0 196.4 1268.0 206.5 1270.3 193.6 1271.4 199.1 1271.7 197.3 1272.7 205.8 1275.0 191.7 1276.1 197.7 1276.4 195.7 1277.4 205.1 1279.6 191.4 1280.6 198.2 1281.0 195.9 1281.9 206.5 1282.9 200.9 1283.3 202.8 1284.2 194.2 1286.5 205.4 1288.6 192.5 1289.5 198.1 1289.9 196.2 1290.7 204.9 1291.7 199.4 1292.1 201.2 1293.0 192.7 1294.0 198.3 1294.4 196.4 1295.3 205.2 1296.3 199.4 1296.7 201.4 1297.6 192.4 1299.8 205.2 1300.8 199.2 1301.1 201.2 1302.0 191.9 1304.3 205.0 1305.3 199.7 1305.7 201.5 1306.6 193.3 1307.8 193.3 1309.0 193.3 1310.2 198.9 1310.6 197.0 1311.6 205.7 1313.8 192.1 1316.2 205.6 1318.6 192.7 1321.1 204.3 1322.2 198.4 1322.6 200.4 1323.6 191.3 1324.6 197.7 1325.0 195.6 1325.9 205.5 1326.9 199.7 1327.3 201.6 1328.2 192.5 1330.7 205.1 1331.7 199.3 1332.1 201.3 1333.0 192.3 1335.1 204.7 1336.2 198.7 1336.6 200.7 1337.6 191.3 1340.0 206.0 1342.3 192.1 1344.7 204.9 1345.8 199.2 1346.2 201.1 1347.2 192.2 1349.7 205.4 1350.8 199.5 1351.2 201.5 1352.2 192.4 1354.3 203.8 1355.4 198.4 1355.7 200.2 1356.7 191.9 1358.9 205.5 1359.8 199.6 1360.2 201.6 1361.0 192.4 1362.1 198.2 1362.4 196.3 1363.4 205.3 1364.5 200.0 1364.9 201.8 1365.9 193.4 1366.9 199.0 1367.2 197.1 1368.1 205.8 1370.4 193.0 1371.4 198.4 1371.7 196.6 1372.6 205.0 1373.7 198.9 1374.0 200.9 1375.0 191.6 1376.2 191.6 1377.4 191.6 1380.0 206.1 1382.1 192.0 1383.2 198.0 1383.6 196.0 1384.6 205.3 1385.6 199.9 1386.0 201.7 1386.9 193.3 1387.9 199.4 1388.2 197.4 1389.1 206.8 1390.2 200.0 1390.6 202.3 1391.6 191.7 1393.8 205.2 1395.9 191.9 1397.0 197.3 1397.4 195.5 1398.4 203.9 1399.4 198.7 1399.7 200.4 1400.6 192.5 1402.9 205.4 1405.4 192.1 1407.5 204.4 1409.8 192.5 1412.0 204.9 1413.1 199.7 1413.5 201.4 1414.5 193.3 1415.7 193.3 1416.9 193.3 1418.1 198.4 1418.5 196.7 1419.5 204.5 1422.0 192.1 1423.0 198.1 1423.3 196.1 1424.2 205.4 1426.6 192.2 1427.7 198.1 1428.1 196.1 1429.1 205.4 1430.1 199.2 1430.4 201.3 1431.3 191.8 1433.8 205.2 1436.2 192.3 1437.2 198.5 1437.5 196.4 1438.4 206.1 1440.9 192.0 1443.2 205.7 1444.1 199.4 1444.5 201.5 1445.3 191.6 1447.4 205.8 1448.4 200.2 1448.7 202.1 1449.6 193.4 1450.7 199.4 1451.0 197.4 1452.0 206.8 1454.5 191.6 1456.8 204.6 1457.8 199.3 1458.2 201.1 1459.1 192.9 1460.0 198.2 1460.4 196.5 1461.2 204.7 1463.4 192.3 1465.8 206.1 1468.1 192.7 1470.2 204.9 1472.3 194.1" stroke="#d8485e" stroke-width="1.15" fill="none" stroke-linejoin="round"/><path d="M305.0 260.8 309.0 260.0 314.0 258.8 317.0 260.8 320.0 260.0 322.0 263.0 324.0 259.5 324.0 260.8 327.0 260.0 332.0 260.8 337.0 260.0 342.0 260.0 345.0 260.0 347.0 257.0 349.0 260.5 349.0 259.2 353.0 260.0 358.0 260.8 361.0 260.8 365.0 260.0 370.0 260.0 372.0 263.0 374.0 259.5 374.0 258.8 378.0 260.4 383.0 259.2 387.0 260.8 392.0 260.0 397.0 260.4 401.0 259.2 406.0 260.0 411.0 259.2 414.0 260.4 417.0 260.0 422.0 259.2 426.0 258.8 430.0 260.4 433.0 259.2 437.0 260.0 440.0 259.2 445.0 260.4 449.0 259.2 452.0 259.2 455.0 260.4 458.0 259.2 461.0 260.4 465.0 260.4 468.0 260.4 473.0 260.8 477.0 259.2 482.0 259.2 487.0 260.8 490.0 260.0 492.0 263.0 494.0 259.5 494.0 260.8 497.0 258.8 500.0 260.0 503.0 259.2 508.0 260.8 513.0 258.8 518.0 260.0 522.0 258.8 526.0 260.4 529.0 260.4 532.0 260.8 536.0 259.2 541.0 260.0 543.0 263.0 545.0 259.5 545.0 260.0 547.0 257.0 549.0 260.5 549.0 260.0 553.0 260.0 556.0 260.8 561.0 259.2 566.0 260.0 569.0 260.4 573.0 260.0 576.0 259.2 581.0 260.8 586.0 260.0 588.0 257.0 590.0 260.5 590.0 258.8 594.0 258.8 597.0 259.2 602.0 259.2 607.0 260.8 611.0 258.8 616.0 259.2 621.0 260.8 624.0 260.8 627.0 259.2 632.0 260.0 634.0 257.0 636.0 260.5 636.0 260.0 638.0 257.0 640.0 260.5 640.0 259.2 643.0 259.2 647.0 259.2 651.0 260.0 653.0 263.0 655.0 259.5 655.0 260.4 658.0 260.4 663.0 258.8 666.0 259.2 671.0 260.0 673.0 263.0 675.0 259.5 675.0 260.4 680.0 260.4 683.0 259.2 686.0 260.4 690.0 260.0 695.0 260.8 698.0 260.4 703.0 258.8 707.0 259.2 710.0 260.8 713.0 260.0 715.0 257.0 717.0 260.5 717.0 260.0 722.0 260.8 726.0 260.8 729.0 260.0 731.0 257.0 733.0 260.5 733.0 258.8 736.0 259.2 740.0 260.8 743.0 259.2 747.0 258.8 751.0 258.8 754.0 258.8 759.0 260.0 761.0 257.0 763.0 260.5 763.0 260.8 768.0 260.0 770.0 257.0 772.0 260.5 772.0 260.8 775.0 260.0 780.0 260.0 782.0 263.0 784.0 259.5 784.0 258.8 789.0 260.0 794.0 260.0 796.0 263.0 798.0 259.5 798.0 260.0 801.0 260.0" stroke="#2aa6e0" stroke-width="1.15" fill="none" stroke-linejoin="round"/><path d="M814.0 258.8 817.0 260.0 821.0 258.8 826.0 259.2 830.0 260.4 835.0 258.8 839.0 260.8 843.0 260.0 847.0 260.0 852.0 260.0 855.0 260.0 858.0 259.2 861.0 260.8 865.0 260.0 869.0 260.8 874.0 260.8 879.0 258.8 883.0 260.8 887.0 259.2 890.0 260.4 894.0 260.4 898.0 259.2 903.0 260.0 906.0 260.0 909.0 260.0 912.0 260.8 916.0 259.2 920.0 258.8 925.0 259.2 928.0 260.8 932.0 259.2 935.0 259.2 938.0 260.8 941.0 260.0 945.0 260.0 947.0 257.0 949.0 260.5 949.0 260.4 953.0 260.0 958.0 260.0 961.0 260.8 964.0 259.2 969.0 259.2 973.0 260.8 977.0 260.0 981.0 260.0 983.0 257.0 985.0 260.5 985.0 260.0 987.0 257.0 989.0 260.5 989.0 260.8 994.0 260.4 997.0 260.4 1002.0 260.4 1007.0 260.8 1010.0 260.8 1014.0 260.0 1017.0 260.0 1019.0 257.0 1021.0 260.5 1021.0 259.2 1025.0 260.0 1030.0 258.8 1035.0 258.8 1038.0 260.0 1042.0 259.2 1046.0 260.0 1048.0 257.0 1050.0 260.5 1050.0 259.2 1055.0 260.0 1059.0 260.8 1062.0 260.0 1066.0 260.8 1069.0 260.0 1072.0 260.0 1075.0 260.0 1079.0 260.0 1081.0 257.0 1083.0 260.5 1083.0 260.8 1086.0 258.8 1089.0 258.8 1093.0 260.4 1096.0 258.8 1101.0 258.8 1106.0 258.8 1109.0 258.8 1114.0 260.0 1119.0 260.8 1122.0 260.0 1124.0 257.0 1126.0 260.5 1126.0 259.2 1129.0 260.4 1134.0 260.0 1136.0 263.0 1138.0 259.5 1138.0 260.0 1140.0 257.0 1142.0 260.5 1142.0 260.8 1146.0 260.4 1149.0 258.8 1154.0 258.8 1157.0 260.4 1161.0 259.2 1164.0 260.8 1167.0 260.4 1171.0 260.0 1175.0 259.2 1178.0 260.8 1181.0 259.2 1185.0 259.2 1190.0 260.0 1194.0 260.0 1196.0 263.0 1198.0 259.5 1198.0 260.0 1203.0 260.4 1207.0 259.2 1211.0 260.0 1216.0 260.0 1220.0 260.0 1222.0 257.0 1224.0 260.5 1224.0 258.8 1228.0 260.4 1231.0 260.8 1234.0 260.8 1239.0 259.2 1242.0 258.8 1246.0 259.2 1249.0 260.4 1253.0 260.0 1255.0 257.0 1257.0 260.5 1257.0 260.0 1259.0 257.0 1261.0 260.5 1261.0 260.4 1265.0 260.8 1269.0 259.2 1272.0 260.0 1276.0 260.4 1279.0 260.8 1284.0 260.0 1286.0 257.0 1288.0 260.5 1288.0 259.2 1292.0 260.0 1294.0 263.0 1296.0 259.5 1296.0 258.8 1299.0 260.4 1303.0 259.2 1306.0 260.0 1308.0 263.0 1310.0 259.5 1310.0 260.8 1313.0 260.4 1318.0 259.2 1322.0 260.4 1327.0 260.0 1330.0 260.4 1334.0 260.8 1339.0 260.4 1342.0 258.8 1345.0 260.4 1349.0 259.2 1354.0 259.2 1358.0 259.2 1362.0 260.4 1365.0 260.8 1368.0 260.4 1373.0 259.2 1377.0 258.8 1380.0 260.8 1384.0 259.2 1387.0 258.8 1390.0 260.4 1394.0 258.8 1397.0 259.2 1400.0 258.8 1404.0 258.8 1409.0 260.8 1412.0 260.8 1416.0 260.4 1420.0 260.0 1423.0 260.0 1425.0 257.0 1427.0 260.5 1427.0 260.4 1432.0 260.0 1436.0 258.8 1440.0 260.8 1443.0 260.8 1448.0 260.0 1453.0 260.4 1456.0 260.0 1459.0 260.8 1464.0 259.2 1467.0 258.8 1472.0 260.0 1473.0 260.0" stroke="#2aa6e0" stroke-width="1.15" fill="none" stroke-linejoin="round"/><path d="M304.5 429.0 312.9 429.0 313.2 398.0 314.9 397.0 315.1 335.0 316.9 334.0 316.9 302.0 322.3 303.0 322.6 334.0 323.6 335.0 323.8 397.0 324.8 398.0 324.8 429.0 332.6 429.0 332.9 398.0 333.9 397.0 334.1 335.0 335.1 334.0 335.1 302.0 341.2 300.0 341.5 334.0 342.4 335.0 342.6 397.0 343.7 398.0 343.7 429.0 351.5 429.0 351.8 398.0 352.8 397.0 352.9 335.0 354.0 334.0 354.0 302.0 362.7 303.0 363.0 334.0 363.9 335.0 364.1 397.0 365.2 398.0 365.2 429.0 374.2 429.0 374.5 398.0 375.4 397.0 375.6 335.0 376.7 334.0 376.7 302.0 385.0 303.0 385.3 334.0 386.2 335.0 386.4 397.0 387.5 398.0 387.5 429.0 397.9 429.0 398.2 398.0 399.6 397.0 399.8 335.0 401.3 334.0 401.3 302.0 406.4 300.0 406.7 334.0 407.6 335.0 407.8 397.0 408.9 398.0 408.9 429.0 416.7 429.0 417.0 398.0 417.9 397.0 418.1 335.0 419.2 334.0 419.2 302.0 426.2 300.0 426.5 334.0 427.4 335.0 427.6 397.0 428.7 398.0 428.7 429.0 435.6 429.0 435.9 398.0 436.9 397.0 437.1 335.0 438.1 334.0 438.1 302.0 445.0 302.0 445.3 334.0 446.2 335.0 446.4 397.0 447.5 398.0 447.5 429.0 453.9 429.0 454.2 398.0 455.1 397.0 455.3 335.0 456.4 334.0 456.4 302.0 463.7 302.0 464.0 334.0 464.9 335.0 465.1 397.0 466.2 398.0 466.2 429.0 472.3 429.0 472.6 398.0 473.6 397.0 473.8 335.0 474.8 334.0 474.8 302.0 481.8 300.0 482.1 334.0 483.1 335.0 483.2 397.0 484.3 398.0 484.3 429.0 488.6 429.0 488.9 398.0 489.9 397.0 490.1 335.0 491.1 334.0 491.1 302.0 500.6 303.0 500.9 334.0 501.9 335.0 502.1 397.0 503.1 398.0 503.1 429.0 511.8 429.0 512.1 398.0 513.0 397.0 513.2 335.0 514.3 334.0 514.3 302.0 523.8 300.0 524.1 334.0 525.0 335.0 525.2 397.0 526.3 398.0 526.3 429.0 535.0 429.0 535.3 398.0 536.2 397.0 536.5 335.0 537.5 334.0 537.5 302.0 547.9 302.0 548.2 334.0 549.1 335.0 549.4 397.0 550.4 398.0 550.4 429.0 556.4 429.0 556.7 398.0 557.6 397.0 557.9 335.0 558.9 334.0 558.9 302.0 566.4 302.0 566.7 334.0 567.6 335.0 567.9 397.0 568.9 398.0 568.9 429.0 575.3 429.0 575.6 398.0 576.5 397.0 576.8 335.0 577.8 334.0 577.8 302.0 584.8 303.0 585.1 334.0 586.0 335.0 586.2 397.0 587.3 398.0 587.3 429.0 592.5 429.0 592.8 398.0 593.8 397.0 594.0 335.0 595.0 334.0 595.0 302.0 601.8 301.0 602.1 334.0 603.0 335.0 603.2 397.0 604.3 398.0 604.3 429.0 611.2 429.0 611.5 398.0 612.5 397.0 612.7 335.0 613.7 334.0 613.7 302.0 619.7 302.0 620.0 334.0 621.0 335.0 621.2 397.0 622.2 398.0 622.2 429.0 629.2 429.0 629.5 398.0 630.5 397.0 630.7 335.0 631.7 334.0 631.7 302.0 638.6 302.0 638.9 334.0 639.9 335.0 640.1 397.0 641.1 398.0 641.1 429.0 649.8 429.0 650.1 398.0 651.0 397.0 651.2 335.0 652.3 334.0 652.3 302.0 661.8 300.0 662.1 334.0 663.0 335.0 663.2 397.0 664.3 398.0 664.3 429.0 675.5 429.0 675.8 398.0 676.8 397.0 677.0 335.0 678.0 334.0 678.0 302.0 685.8 302.0 686.1 334.0 687.0 335.0 687.2 397.0 688.3 398.0 688.3 429.0 695.3 429.0 695.6 398.0 696.5 397.0 696.8 335.0 697.8 334.0 697.8 302.0 703.9 300.0 704.2 334.0 705.1 335.0 705.4 397.0 706.4 398.0 706.4 429.0 713.3 429.0 713.6 398.0 714.5 397.0 714.8 335.0 715.8 334.0 715.8 302.0 722.7 303.0 723.0 334.0 724.0 335.0 724.2 397.0 725.2 398.0 725.2 429.0 732.2 429.0 732.5 398.0 733.5 397.0 733.7 335.0 734.7 334.0 734.7 302.0 742.1 303.0 742.4 334.0 743.4 335.0 743.6 397.0 744.6 398.0 744.6 429.0 751.5 429.0 751.8 398.0 752.8 397.0 753.0 335.0 754.0 334.0 754.0 302.0 760.4 300.0 760.7 334.0 761.6 335.0 761.9 397.0 762.9 398.0 762.9 429.0 770.2 429.0 770.5 398.0 771.5 397.0 771.7 335.0 772.7 334.0 772.7 302.0 779.9 302.0 780.2 334.0 781.1 335.0 781.4 397.0 782.4 398.0 782.4 429.0 791.4 429.0 791.7 398.0 792.8 397.0 793.0 335.0 794.1 334.0 794.1 302.0 797.0 302.0 799.0 299.0 801.2 295.6" stroke="#80c8a2" stroke-width="1.15" fill="none" stroke-linejoin="round"/><path d="M813.8 429.0 813.8 330.0 814.5 312.0 816.0 305.0 818.0 302.0 823.4 302.0 823.4 334.0 824.6 335.0 824.6 397.0 825.9 398.0 825.9 429.0 833.1 429.0 833.4 398.0 834.4 397.0 834.6 335.0 835.6 334.0 835.6 302.0 842.5 300.0 842.8 334.0 843.8 335.0 844.0 397.0 845.0 398.0 845.0 429.0 850.9 429.0 851.2 398.0 852.9 397.0 853.1 335.0 854.9 334.0 854.9 302.0 866.0 302.0 866.3 334.0 867.2 335.0 867.5 397.0 868.5 398.0 868.5 429.0 880.1 429.0 880.4 398.0 881.4 397.0 881.6 335.0 882.6 334.0 882.6 302.0 892.7 300.0 893.0 334.0 894.0 335.0 894.2 397.0 895.2 398.0 895.2 429.0 906.3 429.0 906.6 398.0 907.5 397.0 907.8 335.0 908.8 334.0 908.8 302.0 912.3 302.0 912.6 334.0 913.5 335.0 913.8 397.0 914.8 398.0 914.8 429.0 920.0 429.0 920.3 398.0 921.2 397.0 921.5 335.0 922.5 334.0 922.5 302.0 929.5 302.0 929.8 334.0 930.8 335.0 931.0 397.0 932.0 398.0 932.0 429.0 935.5 429.0 935.8 398.0 937.5 397.0 937.7 335.0 939.5 334.0 939.5 302.0 945.8 302.0 946.1 334.0 947.0 335.0 947.2 397.0 948.3 398.0 948.3 429.0 954.4 429.0 954.7 398.0 955.6 397.0 955.9 335.0 956.9 334.0 956.9 302.0 963.8 302.0 964.1 334.0 965.0 335.0 965.2 397.0 966.3 398.0 966.3 429.0 972.4 429.0 972.7 398.0 973.6 397.0 973.9 335.0 974.9 334.0 974.9 302.0 980.1 302.0 980.4 334.0 981.4 335.0 981.6 397.0 982.6 398.0 982.6 429.0 990.4 429.0 990.7 398.0 991.6 397.0 991.9 335.0 992.9 334.0 992.9 302.0 1004.2 300.0 1004.5 334.0 1005.5 335.0 1005.7 397.0 1006.7 398.0 1006.7 429.0 1017.0 429.0 1017.3 398.0 1018.2 397.0 1018.5 335.0 1019.5 334.0 1019.5 302.0 1032.5 302.0 1032.8 334.0 1033.8 335.0 1034.0 397.0 1035.0 398.0 1035.0 429.0 1043.5 429.0 1043.8 398.0 1044.8 397.0 1045.0 335.0 1046.0 334.0 1046.0 302.0 1053.4 303.0 1053.7 334.0 1054.7 335.0 1054.9 397.0 1055.9 398.0 1055.9 429.0 1059.7 429.0 1060.0 398.0 1061.0 397.0 1061.2 335.0 1062.2 334.0 1062.2 302.0 1069.2 301.0 1069.5 334.0 1070.5 335.0 1070.7 397.0 1071.7 398.0 1071.7 429.0 1076.0 429.0 1076.3 398.0 1077.2 397.0 1077.5 335.0 1078.5 334.0 1078.5 302.0 1086.0 303.0 1086.3 334.0 1087.2 335.0 1087.5 397.0 1088.5 398.0 1088.5 429.0 1092.4 429.0 1092.7 398.0 1094.4 397.0 1094.6 335.0 1096.4 334.0 1096.4 302.0 1101.5 300.0 1101.8 334.0 1102.8 335.0 1103.0 397.0 1104.0 398.0 1104.0 429.0 1111.2 429.0 1111.5 398.0 1112.5 397.0 1112.7 335.0 1113.7 334.0 1113.7 302.0 1120.7 302.0 1121.0 334.0 1122.0 335.0 1122.2 397.0 1123.2 398.0 1123.2 429.0 1130.1 429.0 1130.4 398.0 1131.3 397.0 1131.5 335.0 1132.6 334.0 1132.6 302.0 1142.1 300.0 1142.4 334.0 1143.3 335.0 1143.5 397.0 1144.6 398.0 1144.6 429.0 1155.0 429.0 1155.3 398.0 1157.0 397.0 1157.2 335.0 1159.0 334.0 1159.0 302.0 1170.5 302.0 1170.8 334.0 1171.8 335.0 1172.0 397.0 1173.0 398.0 1173.0 429.0 1183.3 429.0 1183.6 398.0 1184.5 397.0 1184.8 335.0 1185.8 334.0 1185.8 302.0 1191.8 301.0 1192.1 334.0 1193.0 335.0 1193.2 397.0 1194.3 398.0 1194.3 429.0 1201.2 429.0 1201.5 398.0 1202.5 397.0 1202.7 335.0 1203.7 334.0 1203.7 302.0 1207.2 303.0 1207.5 334.0 1208.5 335.0 1208.7 397.0 1209.7 398.0 1209.7 429.0 1216.6 429.0 1216.9 398.0 1217.8 397.0 1218.0 335.0 1219.1 334.0 1219.1 302.0 1224.3 302.0 1224.6 334.0 1225.5 335.0 1225.8 397.0 1226.8 398.0 1226.8 429.0 1233.8 429.0 1234.1 398.0 1235.0 397.0 1235.2 335.0 1236.3 334.0 1236.3 302.0 1242.9 302.0 1243.2 334.0 1244.2 335.0 1244.4 397.0 1245.4 398.0 1245.4 429.0 1251.5 429.0 1251.8 398.0 1253.2 397.0 1253.4 335.0 1254.9 334.0 1254.9 302.0 1260.4 303.0 1260.7 334.0 1261.7 335.0 1261.9 397.0 1262.9 398.0 1262.9 429.0 1268.1 429.0 1268.4 398.0 1269.3 397.0 1269.5 335.0 1270.6 334.0 1270.6 302.0 1279.3 301.0 1279.6 334.0 1280.5 335.0 1280.8 397.0 1281.8 398.0 1281.8 429.0 1293.9 429.0 1294.2 398.0 1295.2 397.0 1295.4 335.0 1296.4 334.0 1296.4 302.0 1308.5 303.0 1308.8 334.0 1309.8 335.0 1310.0 397.0 1311.0 398.0 1311.0 429.0 1322.2 429.0 1322.5 398.0 1323.5 397.0 1323.7 335.0 1324.7 334.0 1324.7 302.0 1331.5 300.0 1331.8 334.0 1332.8 335.0 1333.0 397.0 1334.0 398.0 1334.0 429.0 1338.8 429.0 1339.1 398.0 1340.0 397.0 1340.2 335.0 1341.3 334.0 1341.3 302.0 1348.0 302.0 1348.3 334.0 1349.2 335.0 1349.5 397.0 1350.5 398.0 1350.5 429.0 1354.9 429.0 1355.2 398.0 1356.2 397.0 1356.4 335.0 1357.4 334.0 1357.4 302.0 1363.5 301.0 1363.8 334.0 1364.8 335.0 1365.0 397.0 1366.0 398.0 1366.0 429.0 1371.2 429.0 1371.5 398.0 1372.5 397.0 1372.7 335.0 1373.7 334.0 1373.7 302.0 1381.2 301.0 1381.5 334.0 1382.5 335.0 1382.7 397.0 1383.7 398.0 1383.7 429.0 1390.1 429.0 1390.4 398.0 1391.6 397.0 1391.8 335.0 1393.1 334.0 1393.1 302.0 1398.7 302.0 1399.0 334.0 1400.0 335.0 1400.2 397.0 1401.2 398.0 1401.2 429.0 1409.0 429.0 1409.3 398.0 1410.2 397.0 1410.5 335.0 1411.5 334.0 1411.5 302.0 1417.6 300.0 1417.9 334.0 1418.8 335.0 1419.0 397.0 1420.1 398.0 1420.1 429.0 1432.1 429.0 1432.4 398.0 1433.3 397.0 1433.5 335.0 1434.6 334.0 1434.6 302.0 1445.9 301.0 1446.2 334.0 1447.2 335.0 1447.4 397.0 1448.4 398.0 1448.4 429.0 1462.2 429.0 1462.5 398.0 1463.9 397.0 1464.1 335.0 1465.6 334.0 1465.6 302.0 1469.0 302.0 1471.0 299.0 1473.0 300.5" stroke="#80c8a2" stroke-width="1.15" fill="none" stroke-linejoin="round"/><path d="M304.0 539.8 305.0 551.5 306.0 562.7 307.0 572.8 308.0 581.6 309.0 588.9 310.0 594.3 311.0 597.7 312.0 599.0 313.0 598.2 314.0 595.2 315.0 590.3 316.0 583.4 317.0 575.0 318.0 565.1 319.0 554.2 320.0 542.5 321.0 530.5 322.0 518.5 323.0 506.9 324.0 496.0 325.0 486.3 326.0 477.9 327.0 471.2 328.0 466.4 329.0 463.7 330.0 463.0 331.0 464.5 332.0 468.1 333.0 473.7 334.0 481.1 335.0 490.0 336.0 500.2 337.0 511.4 338.0 523.3 339.0 535.3 340.0 547.2 341.0 558.7 342.0 569.2 343.0 578.5 344.0 586.4 345.0 592.5 346.0 596.6 347.0 598.7 348.0 598.7 349.0 596.6 350.0 592.3 351.0 586.2 352.0 578.3 353.0 568.9 354.0 558.3 355.0 546.9 356.0 535.0 357.0 522.9 358.0 511.1 359.0 499.9 360.0 489.7 361.0 480.8 362.0 473.5 363.0 468.0 364.0 464.5 365.0 463.0 366.0 463.7 367.0 466.6 368.0 471.4 369.0 478.1 370.0 486.5 371.0 496.3 372.0 507.2 373.0 518.8 374.0 530.8 375.0 542.9 376.0 554.5 377.0 565.4 378.0 575.2 379.0 583.7 380.0 590.4 381.0 595.3 382.0 598.2 383.0 599.0 384.0 597.6 385.0 594.1 386.0 588.7 387.0 581.4 388.0 572.5 389.0 562.4 390.0 551.2 391.0 539.4 392.0 527.3 393.0 515.4 394.0 504.0 395.0 493.4 396.0 483.9 397.0 476.0 398.0 469.8 399.0 465.5 400.0 463.3 401.0 463.2 402.0 465.3 403.0 469.4 404.0 475.4 405.0 483.2 406.0 492.6 407.0 503.1 408.0 514.5 409.0 526.4 410.0 538.4 411.0 550.3 412.0 561.5 413.0 571.8 414.0 580.7 415.0 588.1 416.0 593.8 417.0 597.4 418.0 598.9 419.0 598.4 420.0 595.6 421.0 590.9 422.0 584.3 423.0 576.0 424.0 566.2 425.0 555.4 426.0 543.8 427.0 531.8 428.0 519.8 429.0 508.1 430.0 497.2 431.0 487.3 432.0 478.8 433.0 471.9 434.0 466.9 435.0 463.9 436.0 463.0 437.0 464.3 438.0 467.6 439.0 473.0 440.0 480.2 441.0 489.0 442.0 499.1 443.0 510.2 444.0 521.9 445.0 534.0 446.0 545.9 447.0 557.4 448.0 568.1 449.0 577.6 450.0 585.6 451.0 591.9 452.0 596.3 453.0 598.6 454.0 598.8 455.0 596.9 456.0 592.9 457.0 586.9 458.0 579.2 459.0 570.0 460.0 559.5 461.0 548.2 462.0 536.3 463.0 524.2 464.0 512.4 465.0 501.1 466.0 490.8 467.0 481.7 468.0 474.2 469.0 468.5 470.0 464.8 471.0 463.1 472.0 463.6 473.0 466.1 474.0 470.8 475.0 477.3 476.0 485.5 477.0 495.2 478.0 506.0 479.0 517.5 480.0 529.5 481.0 541.6 482.0 553.3 483.0 564.3 484.0 574.2 485.0 582.8 486.0 589.8 487.0 594.9 488.0 598.0 489.0 599.0 490.0 597.9 491.0 594.6 492.0 589.4 493.0 582.3 494.0 573.6 495.0 563.5 496.0 552.5 497.0 540.7 498.0 528.7 499.0 516.7 500.0 505.2 501.0 494.5 502.0 484.9 503.0 476.8 504.0 470.4 505.0 465.9 506.0 463.5 507.0 463.1 508.0 464.9 509.0 468.8 510.0 474.7 511.0 482.3 512.0 491.5 513.0 501.9 514.0 513.2 515.0 525.1 516.0 537.1 517.0 549.0 518.0 560.3 519.0 570.7 520.0 579.8 521.0 587.4 522.0 593.2 523.0 597.1 524.0 598.9 525.0 598.5 526.0 596.0 527.0 591.5 528.0 585.1 529.0 577.0 530.0 567.4 531.0 556.7 532.0 545.1 533.0 533.1 534.0 521.1 535.0 509.4 536.0 498.3 537.0 488.3 538.0 479.6 539.0 472.6 540.0 467.3 541.0 464.1 542.0 463.0 543.0 464.0 544.0 467.2 545.0 472.3 546.0 479.3 547.0 487.9 548.0 497.9 549.0 508.9 550.0 520.6 551.0 532.7 552.0 544.6 553.0 556.2 554.0 567.0 555.0 576.6 556.0 584.8 557.0 591.3 558.0 595.9 559.0 598.5 560.0 598.9 561.0 597.2 562.0 593.4 563.0 587.7 564.0 580.1 565.0 571.1 566.0 560.7 567.0 549.5 568.0 537.6 569.0 525.5 570.0 513.6 571.0 502.3 572.0 491.9 573.0 482.7 574.0 475.0 575.0 469.0 576.0 465.1 577.0 463.2 578.0 463.4 579.0 465.8 580.0 470.2 581.0 476.5 582.0 484.6 583.0 494.1 584.0 504.7 585.0 516.2 586.0 528.2 587.0 540.2 588.0 552.0 589.0 563.1 590.0 573.2 591.0 581.9 592.0 589.1 593.0 594.4 594.0 597.8 595.0 599.0 596.0 598.1 597.0 595.1 598.0 590.0 599.0 583.1 600.0 574.6 601.0 564.7 602.0 553.7 603.0 542.0 604.0 530.0 605.0 518.0 606.0 506.4 607.0 495.6 608.0 485.9 609.0 477.6 610.0 471.0 611.0 466.3 612.0 463.6 613.0 463.1 614.0 464.6 615.0 468.3 616.0 474.0 617.0 481.4 618.0 490.4 619.0 500.7 620.0 511.9 621.0 523.7 622.0 535.8 623.0 547.7 624.0 559.1 625.0 569.6 626.0 578.9 627.0 586.7 628.0 592.7 629.0 596.8 630.0 598.8 631.0 598.7 632.0 596.4 633.0 592.1 634.0 585.9 635.0 577.9 636.0 568.5 637.0 557.9 638.0 546.4 639.0 534.5 640.0 522.4 641.0 510.6 642.0 499.5 643.0 489.3 644.0 480.5 645.0 473.2 646.0 467.8 647.0 464.4 648.0 463.0 649.0 463.8 650.0 466.7 651.0 471.6 652.0 478.4 653.0 486.9 654.0 496.7 655.0 507.7 656.0 519.3 657.0 531.3 658.0 543.3 659.0 555.0 660.0 565.8 661.0 575.6 662.0 584.0 663.0 590.7 664.0 595.5 665.0 598.3 666.0 599.0 667.0 597.5 668.0 593.9 669.0 588.4 670.0 581.1 671.0 572.1 672.0 561.9 673.0 550.7 674.0 538.9 675.0 526.9 676.0 514.9 677.0 503.5 678.0 493.0 679.0 483.6 680.0 475.7 681.0 469.6 682.0 465.4 683.0 463.3 684.0 463.3 685.0 465.4 686.0 469.6 687.0 475.7 688.0 483.6 689.0 493.0 690.0 503.5 691.0 514.9 692.0 526.9 693.0 538.9 694.0 550.7 695.0 561.9 696.0 572.1 697.0 581.1 698.0 588.4 699.0 593.9 700.0 597.5 701.0 599.0 702.0 598.3 703.0 595.5 704.0 590.7 705.0 584.0 706.0 575.6 707.0 565.8 708.0 555.0 709.0 543.3 710.0 531.3 711.0 519.3 712.0 507.7 713.0 496.7 714.0 486.9 715.0 478.4 716.0 471.6 717.0 466.7 718.0 463.8 719.0 463.0 720.0 464.4 721.0 467.8 722.0 473.2 723.0 480.5 724.0 489.3 725.0 499.5 726.0 510.6 727.0 522.4 728.0 534.5 729.0 546.4 730.0 557.9 731.0 568.5 732.0 577.9 733.0 585.9 734.0 592.1 735.0 596.4 736.0 598.7 737.0 598.8 738.0 596.8 739.0 592.7 740.0 586.7 741.0 578.9 742.0 569.6 743.0 559.1 744.0 547.7 745.0 535.8 746.0 523.7 747.0 511.9 748.0 500.7 749.0 490.4 750.0 481.4 751.0 474.0 752.0 468.3 753.0 464.6 754.0 463.1 755.0 463.6 756.0 466.3 757.0 471.0 758.0 477.6 759.0 485.9 760.0 495.6 761.0 506.4 762.0 518.0 763.0 530.0 764.0 542.0 765.0 553.7 766.0 564.7 767.0 574.6 768.0 583.1 769.0 590.0 770.0 595.1 771.0 598.1 772.0 599.0 773.0 597.8 774.0 594.4 775.0 589.1 776.0 581.9 777.0 573.2 778.0 563.1 779.0 552.0 780.0 540.2 781.0 528.2 782.0 516.2 783.0 504.7 784.0 494.1 785.0 484.6 786.0 476.5 787.0 470.2 788.0 465.8 789.0 463.4 790.0 463.2 791.0 465.1 792.0 469.0 793.0 475.0 794.0 482.7 795.0 491.9 796.0 502.3 797.0 513.6 798.0 525.5 799.0 537.6 800.0 549.5" stroke="#e6dc9a" stroke-width="1.3" fill="none" stroke-linejoin="round"/><path d="M814.0 556.2 815.0 544.6 816.0 532.7 817.0 520.6 818.0 508.9 819.0 497.9 820.0 487.9 821.0 479.3 822.0 472.3 823.0 467.2 824.0 464.0 825.0 463.0 826.0 464.1 827.0 467.3 828.0 472.6 829.0 479.6 830.0 488.3 831.0 498.3 832.0 509.4 833.0 521.1 834.0 533.1 835.0 545.1 836.0 556.7 837.0 567.4 838.0 577.0 839.0 585.1 840.0 591.5 841.0 596.0 842.0 598.5 843.0 598.9 844.0 597.1 845.0 593.2 846.0 587.4 847.0 579.8 848.0 570.7 849.0 560.3 850.0 549.0 851.0 537.1 852.0 525.1 853.0 513.2 854.0 501.9 855.0 491.5 856.0 482.3 857.0 474.7 858.0 468.8 859.0 464.9 860.0 463.1 861.0 463.5 862.0 465.9 863.0 470.4 864.0 476.8 865.0 484.9 866.0 494.5 867.0 505.2 868.0 516.7 869.0 528.7 870.0 540.7 871.0 552.5 872.0 563.5 873.0 573.6 874.0 582.3 875.0 589.4 876.0 594.6 877.0 597.9 878.0 599.0 879.0 598.0 880.0 594.9 881.0 589.8 882.0 582.8 883.0 574.2 884.0 564.3 885.0 553.3 886.0 541.6 887.0 529.5 888.0 517.5 889.0 506.0 890.0 495.2 891.0 485.5 892.0 477.3 893.0 470.8 894.0 466.1 895.0 463.6 896.0 463.1 897.0 464.8 898.0 468.5 899.0 474.2 900.0 481.7 901.0 490.8 902.0 501.1 903.0 512.4 904.0 524.2 905.0 536.3 906.0 548.2 907.0 559.5 908.0 570.0 909.0 579.2 910.0 586.9 911.0 592.9 912.0 596.9 913.0 598.8 914.0 598.6 915.0 596.3 916.0 591.9 917.0 585.6 918.0 577.6 919.0 568.1 920.0 557.4 921.0 545.9 922.0 534.0 923.0 521.9 924.0 510.2 925.0 499.1 926.0 489.0 927.0 480.2 928.0 473.0 929.0 467.6 930.0 464.3 931.0 463.0 932.0 463.9 933.0 466.9 934.0 471.9 935.0 478.8 936.0 487.3 937.0 497.2 938.0 508.1 939.0 519.8 940.0 531.8 941.0 543.8 942.0 555.4 943.0 566.2 944.0 576.0 945.0 584.3 946.0 590.9 947.0 595.6 948.0 598.4 949.0 598.9 950.0 597.4 951.0 593.8 952.0 588.1 953.0 580.7 954.0 571.8 955.0 561.5 956.0 550.3 957.0 538.4 958.0 526.4 959.0 514.5 960.0 503.1 961.0 492.6 962.0 483.2 963.0 475.4 964.0 469.4 965.0 465.3 966.0 463.2 967.0 463.3 968.0 465.5 969.0 469.8 970.0 476.0 971.0 483.9 972.0 493.4 973.0 504.0 974.0 515.4 975.0 527.3 976.0 539.4 977.0 551.2 978.0 562.4 979.0 572.5 980.0 581.4 981.0 588.7 982.0 594.1 983.0 597.6 984.0 599.0 985.0 598.2 986.0 595.3 987.0 590.4 988.0 583.7 989.0 575.2 990.0 565.4 991.0 554.5 992.0 542.9 993.0 530.8 994.0 518.8 995.0 507.2 996.0 496.3 997.0 486.5 998.0 478.1 999.0 471.4 1000.0 466.6 1001.0 463.7 1002.0 463.0 1003.0 464.5 1004.0 468.0 1005.0 473.5 1006.0 480.8 1007.0 489.7 1008.0 499.9 1009.0 511.1 1010.0 522.9 1011.0 535.0 1012.0 546.9 1013.0 558.3 1014.0 568.9 1015.0 578.3 1016.0 586.2 1017.0 592.3 1018.0 596.6 1019.0 598.7 1020.0 598.7 1021.0 596.6 1022.0 592.5 1023.0 586.4 1024.0 578.5 1025.0 569.2 1026.0 558.7 1027.0 547.2 1028.0 535.3 1029.0 523.3 1030.0 511.4 1031.0 500.2 1032.0 490.0 1033.0 481.1 1034.0 473.7 1035.0 468.1 1036.0 464.5 1037.0 463.0 1038.0 463.7 1039.0 466.4 1040.0 471.2 1041.0 477.9 1042.0 486.3 1043.0 496.0 1044.0 506.9 1045.0 518.5 1046.0 530.5 1047.0 542.5 1048.0 554.2 1049.0 565.1 1050.0 575.0 1051.0 583.4 1052.0 590.3 1053.0 595.2 1054.0 598.2 1055.0 599.0 1056.0 597.7 1057.0 594.3 1058.0 588.9 1059.0 581.6 1060.0 572.8 1061.0 562.7 1062.0 551.5 1063.0 539.8 1064.0 527.7 1065.0 515.8 1066.0 504.3 1067.0 493.7 1068.0 484.2 1069.0 476.2 1070.0 470.0 1071.0 465.6 1072.0 463.3 1073.0 463.2 1074.0 465.2 1075.0 469.2 1076.0 475.2 1077.0 483.0 1078.0 492.3 1079.0 502.7 1080.0 514.1 1081.0 526.0 1082.0 538.1 1083.0 549.9 1084.0 561.2 1085.0 571.5 1086.0 580.5 1087.0 587.9 1088.0 593.6 1089.0 597.3 1090.0 598.9 1091.0 598.4 1092.0 595.8 1093.0 591.1 1094.0 584.5 1095.0 576.2 1096.0 566.6 1097.0 555.8 1098.0 544.2 1099.0 532.2 1100.0 520.1 1101.0 508.5 1102.0 497.5 1103.0 487.5 1104.0 479.0 1105.0 472.1 1106.0 467.0 1107.0 463.9 1108.0 463.0 1109.0 464.2 1110.0 467.5 1111.0 472.8 1112.0 479.9 1113.0 488.7 1114.0 498.7 1115.0 509.8 1116.0 521.6 1117.0 533.6 1118.0 545.6 1119.0 557.1 1120.0 567.8 1121.0 577.3 1122.0 585.4 1123.0 591.7 1124.0 596.2 1125.0 598.6 1126.0 598.8 1127.0 597.0 1128.0 593.0 1129.0 587.1 1130.0 579.5 1131.0 570.3 1132.0 559.9 1133.0 548.5 1134.0 536.6 1135.0 524.6 1136.0 512.7 1137.0 501.4 1138.0 491.1 1139.0 482.0 1140.0 474.4 1141.0 468.6 1142.0 464.8 1143.0 463.1 1144.0 463.5 1145.0 466.0 1146.0 470.6 1147.0 477.1 1148.0 485.3 1149.0 494.9 1150.0 505.6 1151.0 517.2 1152.0 529.2 1153.0 541.2 1154.0 552.9 1155.0 563.9 1156.0 573.9 1157.0 582.6 1158.0 589.6 1159.0 594.8 1160.0 597.9 1161.0 599.0 1162.0 597.9 1163.0 594.7 1164.0 589.5 1165.0 582.5 1166.0 573.8 1167.0 563.8 1168.0 552.8 1169.0 541.1 1170.0 529.0 1171.0 517.1 1172.0 505.5 1173.0 494.8 1174.0 485.2 1175.0 477.0 1176.0 470.6 1177.0 466.0 1178.0 463.5 1179.0 463.1 1180.0 464.9 1181.0 468.7 1182.0 474.5 1183.0 482.1 1184.0 491.2 1185.0 501.5 1186.0 512.8 1187.0 524.7 1188.0 536.8 1189.0 548.6 1190.0 560.0 1191.0 570.4 1192.0 579.6 1193.0 587.2 1194.0 593.1 1195.0 597.0 1196.0 598.9 1197.0 598.6 1198.0 596.2 1199.0 591.7 1200.0 585.3 1201.0 577.2 1202.0 567.7 1203.0 557.0 1204.0 545.5 1205.0 533.5 1206.0 521.5 1207.0 509.7 1208.0 498.6 1209.0 488.6 1210.0 479.9 1211.0 472.7 1212.0 467.5 1213.0 464.2 1214.0 463.0 1215.0 464.0 1216.0 467.0 1217.0 472.1 1218.0 479.1 1219.0 487.6 1220.0 497.6 1221.0 508.6 1222.0 520.3 1223.0 532.3 1224.0 544.3 1225.0 555.9 1226.0 566.7 1227.0 576.3 1228.0 584.6 1229.0 591.1 1230.0 595.8 1231.0 598.4 1232.0 598.9 1233.0 597.3 1234.0 593.6 1235.0 587.9 1236.0 580.4 1237.0 571.4 1238.0 561.1 1239.0 549.8 1240.0 538.0 1241.0 525.9 1242.0 514.0 1243.0 502.6 1244.0 492.2 1245.0 482.9 1246.0 475.2 1247.0 469.2 1248.0 465.2 1249.0 463.2 1250.0 463.4 1251.0 465.7 1252.0 470.0 1253.0 476.3 1254.0 484.3 1255.0 493.8 1256.0 504.4 1257.0 515.9 1258.0 527.8 1259.0 539.9 1260.0 551.7 1261.0 562.8 1262.0 572.9 1263.0 581.7 1264.0 588.9 1265.0 594.3 1266.0 597.7 1267.0 599.0 1268.0 598.1 1269.0 595.2 1270.0 590.2 1271.0 583.4 1272.0 574.9 1273.0 565.0 1274.0 554.1 1275.0 542.4 1276.0 530.4 1277.0 518.4 1278.0 506.8 1279.0 495.9 1280.0 486.2 1281.0 477.8 1282.0 471.2 1283.0 466.4 1284.0 463.7 1285.0 463.0 1286.0 464.6 1287.0 468.2 1288.0 473.8 1289.0 481.1 1290.0 490.1 1291.0 500.3 1292.0 511.6 1293.0 523.4 1294.0 535.4 1295.0 547.4 1296.0 558.8 1297.0 569.3 1298.0 578.6 1299.0 586.5 1300.0 592.5 1301.0 596.7 1302.0 598.8 1303.0 598.7 1304.0 596.5 1305.0 592.3 1306.0 586.1 1307.0 578.2 1308.0 568.8 1309.0 558.2 1310.0 546.8 1311.0 534.8 1312.0 522.8 1313.0 511.0 1314.0 499.8 1315.0 489.6 1316.0 480.7 1317.0 473.4 1318.0 467.9 1319.0 464.4 1320.0 463.0 1321.0 463.8 1322.0 466.6 1323.0 471.5 1324.0 478.2 1325.0 486.6 1326.0 496.4 1327.0 507.3 1328.0 519.0 1329.0 531.0 1330.0 543.0 1331.0 554.6 1332.0 565.5 1333.0 575.3 1334.0 583.7 1335.0 590.5 1336.0 595.4 1337.0 598.2 1338.0 599.0 1339.0 597.6 1340.0 594.1 1341.0 588.6 1342.0 581.3 1343.0 572.4 1344.0 562.2 1345.0 551.1 1346.0 539.3 1347.0 527.2 1348.0 515.3 1349.0 503.8 1350.0 493.3 1351.0 483.9 1352.0 475.9 1353.0 469.8 1354.0 465.5 1355.0 463.3 1356.0 463.2 1357.0 465.3 1358.0 469.4 1359.0 475.5 1360.0 483.3 1361.0 492.7 1362.0 503.2 1363.0 514.6 1364.0 526.5 1365.0 538.6 1366.0 550.4 1367.0 561.6 1368.0 571.8 1369.0 580.8 1370.0 588.2 1371.0 593.8 1372.0 597.4 1373.0 599.0 1374.0 598.3 1375.0 595.6 1376.0 590.8 1377.0 584.2 1378.0 575.9 1379.0 566.1 1380.0 555.3 1381.0 543.7 1382.0 531.7 1383.0 519.7 1384.0 508.0 1385.0 497.1 1386.0 487.2 1387.0 478.7 1388.0 471.8 1389.0 466.8 1390.0 463.9 1391.0 463.0 1392.0 464.3 1393.0 467.7 1394.0 473.1 1395.0 480.3 1396.0 489.0 1397.0 499.2 1398.0 510.3 1399.0 522.1 1400.0 534.1 1401.0 546.1 1402.0 557.5 1403.0 568.2 1404.0 577.7 1405.0 585.7 1406.0 592.0 1407.0 596.3 1408.0 598.6 1409.0 598.8 1410.0 596.9 1411.0 592.8 1412.0 586.9 1413.0 579.1 1414.0 569.9 1415.0 559.4 1416.0 548.1 1417.0 536.2 1418.0 524.1 1419.0 512.3 1420.0 501.0 1421.0 490.7 1422.0 481.6 1423.0 474.2 1424.0 468.5 1425.0 464.7 1426.0 463.1 1427.0 463.6 1428.0 466.2 1429.0 470.8 1430.0 477.4 1431.0 485.6 1432.0 495.3 1433.0 506.1 1434.0 517.6 1435.0 529.6 1436.0 541.7 1437.0 553.4 1438.0 564.4 1439.0 574.3 1440.0 582.9 1441.0 589.8 1442.0 594.9 1443.0 598.0 1444.0 599.0 1445.0 597.8 1446.0 594.6 1447.0 589.3 1448.0 582.2 1449.0 573.5 1450.0 563.4 1451.0 552.3 1452.0 540.6 1453.0 528.6 1454.0 516.6 1455.0 505.1 1456.0 494.4 1457.0 484.8 1458.0 476.7 1459.0 470.3 1460.0 465.9 1461.0 463.4 1462.0 463.1 1463.0 465.0 1464.0 468.9 1465.0 474.8 1466.0 482.4 1467.0 491.6 1468.0 502.0 1469.0 513.3 1470.0 525.2 1471.0 537.2 1472.0 549.1 1473.0 560.4" stroke="#e6dc9a" stroke-width="1.3" fill="none" stroke-linejoin="round"/><path d="M793 532.5h16M800.5 523v25" stroke="#e6dc9a" stroke-width="1.2"/></g><path d="M1475 198.0h7" stroke="#f4475a" stroke-width="1.2"/><rect x="1481" y="189.0" width="30" height="18" fill="#f4475a"/><text x="1496" y="203.0" fill="#111" font-size="14" font-weight="bold" text-anchor="middle" font-family='"Liberation Sans", sans-serif'>4</text><path d="M1475 260.0h7" stroke="#1aa6e2" stroke-width="1.2"/><rect x="1481" y="251.0" width="30" height="18" fill="#1aa6e2"/><text x="1496" y="265.0" fill="#111" font-size="14" font-weight="bold" text-anchor="middle" font-family='"Liberation Sans", sans-serif'>3</text><path d="M1475 430.0h7" stroke="#5ec896" stroke-width="1.2"/><rect x="1481" y="421.0" width="30" height="18" fill="#5ec896"/><text x="1496" y="435.0" fill="#111" font-size="14" font-weight="bold" text-anchor="middle" font-family='"Liberation Sans", sans-serif'>2</text><path d="M1475 532.0h7" stroke="#f5d660" stroke-width="1.2"/><rect x="1481" y="523.0" width="30" height="18" fill="#f5d660"/><text x="1496" y="537.0" fill="#111" font-size="14" font-weight="bold" text-anchor="middle" font-family='"Liberation Sans", sans-serif'>1</text><rect x="173" y="606" width="1349" height="2.2" fill="#f2f2f2"/><g font-family='"Liberation Sans", sans-serif'><text x="303" y="624" fill="#f4f4f4" font-size="14.5" font-weight="bold" text-anchor="middle">0.0</text><text x="420.2" y="624" fill="#f4f4f4" font-size="14.5" font-weight="bold" text-anchor="middle">0.1</text><text x="537.4" y="624" fill="#f4f4f4" font-size="14.5" font-weight="bold" text-anchor="middle">0.2</text><text x="654.6" y="624" fill="#f4f4f4" font-size="14.5" font-weight="bold" text-anchor="middle">0.3</text><text x="771.8" y="624" fill="#f4f4f4" font-size="14.5" font-weight="bold" text-anchor="middle">0.4</text><text x="889" y="624" fill="#f4f4f4" font-size="14.5" font-weight="bold" text-anchor="middle">0.5</text><text x="1006.2" y="624" fill="#f4f4f4" font-size="14.5" font-weight="bold" text-anchor="middle">0.6</text><text x="1123.4" y="624" fill="#f4f4f4" font-size="14.5" font-weight="bold" text-anchor="middle">0.7</text><text x="1240.6" y="624" fill="#f4f4f4" font-size="14.5" font-weight="bold" text-anchor="middle">0.8</text><text x="1357.8" y="624" fill="#f4f4f4" font-size="14.5" font-weight="bold" text-anchor="middle">0.9</text><text x="1453" y="624" fill="#f4f4f4" font-size="14.5" font-weight="bold" text-anchor="start">1.0 s</text></g><g font-family='"Liberation Sans", sans-serif'><text x="219" y="644" fill="#f2f2f2" font-size="12.5" font-weight="bold" text-anchor="middle">Profile</text><rect x="184" y="649" width="566" height="2" fill="#cfcfcf"/><rect x="815" y="649" width="251" height="2" fill="#cfcfcf"/><rect x="1130" y="649" width="382" height="2" fill="#cfcfcf"/><text x="855" y="644" fill="#f2f2f2" font-size="12.5" font-weight="bold" text-anchor="middle">Min</text><text x="940" y="644" fill="#f2f2f2" font-size="12.5" font-weight="bold" text-anchor="middle">Live</text><text x="1025" y="644" fill="#f2f2f2" font-size="12.5" font-weight="bold" text-anchor="middle">Max</text><text x="1176" y="644" fill="#f2f2f2" font-size="12.5" font-weight="bold" text-anchor="middle">Cursor 1</text><text x="1266.5" y="644" fill="#f2f2f2" font-size="12.5" font-weight="bold" text-anchor="middle">Cursor 2</text><text x="1357" y="644" fill="#f2f2f2" font-size="12.5" font-weight="bold" text-anchor="middle">Delta</text><text x="1451" y="644" fill="#f2f2f2" font-size="12.5" font-weight="bold" text-anchor="middle">Frequency</text><path d="M212.5 655.9v-2.6h14.6v2.6M212.5 664.9v2.6h14.6v-2.6" stroke="#f6dc6a" stroke-width="1.3" fill="none" opacity="0.9"/><path d="M212.4 660.5q7.4 -6.6 14.8 0q-7.4 6.6 -14.8 0z" fill="#f4f4f4"/><circle cx="219.8" cy="660.5" r="2.7" fill="#151515"/><circle cx="220.5" cy="659.7" r="0.9" fill="#f4f4f4"/><text x="298" y="665.5" fill="#f6dc6a" font-size="12.5" font-weight="bold" text-anchor="middle">1</text><g transform="translate(0.0 0.0)" stroke="#f6dc6a" fill="none" stroke-width="1.5"><path d="M352 659.5h8.3"/><path d="M360.3 659.5l2.7 -2.3h12.5v4.6h-12.5z"/><path d="M363 654.2v10.8"/><path d="M375.5 659.5l1.6 -1.6 1.4 2 1.4 -2 1.4 1.6"/><path d="M381 658.8q3.2 0 3.2 2.6q0 2 -3 2.4q-1.8 0.3 -1.8 1.8h7.6"/></g><text x="686" y="665.1" fill="#f6dc6a" font-size="12.5" font-weight="bold" text-anchor="end">10 V</text><text x="855" y="665" fill="#f6dc6a" font-size="12.5" font-weight="bold" text-anchor="middle">-1.40</text><text x="939.5" y="667.6" fill="#f6dc6a" font-size="16.5" font-weight="bold" text-anchor="middle">0.01</text><text x="1025" y="665" fill="#f6dc6a" font-size="12.5" font-weight="bold" text-anchor="middle">1.44</text><path d="M212.5 675.9v-2.6h14.6v2.6M212.5 684.9v2.6h14.6v-2.6" stroke="#7ccf9a" stroke-width="1.3" fill="none" opacity="0.9"/><path d="M212.4 680.5q7.4 -6.6 14.8 0q-7.4 6.6 -14.8 0z" fill="#f4f4f4"/><circle cx="219.8" cy="680.5" r="2.7" fill="#151515"/><circle cx="220.5" cy="679.7" r="0.9" fill="#f4f4f4"/><text x="298" y="685.5" fill="#7ccf9a" font-size="12.5" font-weight="bold" text-anchor="middle">2</text><g transform="translate(0.0 20.0)" stroke="#7ccf9a" fill="none" stroke-width="1.5"><path d="M352 659.5h8.3"/><path d="M360.3 659.5l2.7 -2.3h12.5v4.6h-12.5z"/><path d="M363 654.2v10.8"/><path d="M375.5 659.5l1.6 -1.6 1.4 2 1.4 -2 1.4 1.6"/><path d="M381 658.8q3.2 0 3.2 2.6q0 2 -3 2.4q-1.8 0.3 -1.8 1.8h7.6"/></g><text x="686" y="685.1" fill="#7ccf9a" font-size="12.5" font-weight="bold" text-anchor="end">20 V</text><text x="855" y="685" fill="#7ccf9a" font-size="12.5" font-weight="bold" text-anchor="middle">-0.14</text><text x="939.5" y="687.6" fill="#7ccf9a" font-size="16.5" font-weight="bold" text-anchor="middle">2.51</text><text x="1025" y="685" fill="#7ccf9a" font-size="12.5" font-weight="bold" text-anchor="middle">5.24</text><path d="M212.5 695.9v-2.6h14.6v2.6M212.5 704.9v2.6h14.6v-2.6" stroke="#22a9e6" stroke-width="1.3" fill="none" opacity="0.9"/><path d="M212.4 700.5q7.4 -6.6 14.8 0q-7.4 6.6 -14.8 0z" fill="#f4f4f4"/><circle cx="219.8" cy="700.5" r="2.7" fill="#151515"/><circle cx="220.5" cy="699.7" r="0.9" fill="#f4f4f4"/><text x="298" y="705.5" fill="#22a9e6" font-size="12.5" font-weight="bold" text-anchor="middle">3</text><g transform="translate(0.0 40.0)" stroke="#22a9e6" fill="none" stroke-width="1.5"><path d="M352 659.5h8.3"/><path d="M360.3 659.5l2.7 -2.3h12.5v4.6h-12.5z"/><path d="M363 654.2v10.8"/><path d="M375.5 659.5l1.6 -1.6 1.4 2 1.4 -2 1.4 1.6"/><path d="M381 658.8q3.2 0 3.2 2.6q0 2 -3 2.4q-1.8 0.3 -1.8 1.8h7.6"/></g><text x="686" y="705.1" fill="#22a9e6" font-size="12.5" font-weight="bold" text-anchor="end">20 V</text><text x="855" y="705" fill="#22a9e6" font-size="12.5" font-weight="bold" text-anchor="middle">-0.21</text><text x="939.5" y="707.6" fill="#22a9e6" font-size="16.5" font-weight="bold" text-anchor="middle">0.02</text><text x="1025" y="705" fill="#22a9e6" font-size="12.5" font-weight="bold" text-anchor="middle">0.31</text><path d="M212.5 715.9v-2.6h14.6v2.6M212.5 724.9v2.6h14.6v-2.6" stroke="#f0455a" stroke-width="1.3" fill="none" opacity="0.9"/><path d="M212.4 720.5q7.4 -6.6 14.8 0q-7.4 6.6 -14.8 0z" fill="#f4f4f4"/><circle cx="219.8" cy="720.5" r="2.7" fill="#151515"/><circle cx="220.5" cy="719.7" r="0.9" fill="#f4f4f4"/><text x="298" y="725.5" fill="#f0455a" font-size="12.5" font-weight="bold" text-anchor="middle">4</text><g transform="translate(0.0 60.0)" stroke="#f0455a" fill="none" stroke-width="1.5"><path d="M352 659.5h8.3"/><path d="M360.3 659.5l2.7 -2.3h12.5v4.6h-12.5z"/><path d="M363 654.2v10.8"/><path d="M375.5 659.5l1.6 -1.6 1.4 2 1.4 -2 1.4 1.6"/><path d="M381 658.8q3.2 0 3.2 2.6q0 2 -3 2.4q-1.8 0.3 -1.8 1.8h7.6"/></g><text x="686" y="725.1" fill="#f0455a" font-size="12.5" font-weight="bold" text-anchor="end">20 V</text><text x="855" y="725" fill="#f0455a" font-size="12.5" font-weight="bold" text-anchor="middle">-0.55</text><text x="939.5" y="727.6" fill="#f0455a" font-size="16.5" font-weight="bold" text-anchor="middle">0.01</text><text x="1025" y="725" fill="#f0455a" font-size="12.5" font-weight="bold" text-anchor="middle">0.32</text><text x="672" y="745" fill="#f2f2f2" font-size="12.5" font-weight="bold" text-anchor="middle">1 s</text><path d="M718 653.5h3q2 0 3 3l3 8q1 3 4 3h1.5" stroke="#e6dc9a" stroke-width="1.4" fill="none"/><path d="M417.8 727.4L419 722L419.7 718H422L422.5 722L423.3 724L425 719L426 713L427 711.7H428.5L429 716L430.5 718.5L431.5 723L432.5 727.4Z" fill="#f0455a"/></g><g font-family='"Liberation Sans", sans-serif'><text x="223.5" y="70.7" fill="#f5f5f5" font-size="14.6" font-weight="bold" text-anchor="start">Back</text><text x="326.5" y="70.7" fill="#f5f5f5" font-size="14.6" font-weight="bold" text-anchor="start">Setup</text><text x="434" y="70.7" fill="#f5f5f5" font-size="14.6" font-weight="bold" text-anchor="start">Data</text><text x="533" y="70.7" fill="#f5f5f5" font-size="14.6" font-weight="bold" text-anchor="start">Cursors</text><text x="657.5" y="70.7" fill="#f5f5f5" font-size="14.6" font-weight="bold" text-anchor="start">Refresh</text><text x="779.5" y="70.7" fill="#f5f5f5" font-size="14.6" font-weight="bold" text-anchor="start">File</text><text x="872.5" y="70.7" fill="#f5f5f5" font-size="14.6" font-weight="bold" text-anchor="start">Print</text><text x="1440.5" y="70.7" fill="#f5f5f5" font-size="14.6" font-weight="bold" text-anchor="start">Power Off</text><path d="M187 65h15.5M195 57l-8 8 8 8" stroke="#f5f5f5" stroke-width="3" fill="none" stroke-linecap="round" stroke-linejoin="round"/><path d="M299.09 70.67L298.76 71.52L298.32 72.33L296.71 72.18L296.21 72.71L295.64 73.17L295.01 73.55L294.83 75.16L293.95 75.43L293.05 75.57L292.13 75.59L291.46 74.12L290.75 73.95L290.06 73.69L289.42 73.34L287.93 73.99L287.26 73.36L286.69 72.65L286.21 71.87L287.15 70.54L286.94 69.84L286.82 69.12L286.80 68.39L285.50 67.42L285.71 66.53L286.04 65.68L286.48 64.87L288.09 65.02L288.59 64.49L289.16 64.03L289.79 63.65L289.97 62.04L290.85 61.77L291.75 61.63L292.67 61.61L293.34 63.08L294.05 63.25L294.74 63.51L295.38 63.86L296.87 63.21L297.54 63.84L298.11 64.55L298.59 65.33L297.65 66.66L297.86 67.36L297.98 68.08L298.00 68.81L299.30 69.78z" fill="#f5f5f5" stroke="#f5f5f5" stroke-width="0.8" stroke-linejoin="round"/><circle cx="292.4" cy="68.6" r="3.7" fill="none" stroke="#8d9298" stroke-width="1.2"/><circle cx="292.4" cy="68.6" r="2.3" fill="#f5f5f5"/><path d="M306.64 61.84L306.36 62.56L305.99 63.24L304.63 63.11L304.21 63.56L303.73 63.95L303.20 64.27L303.05 65.63L302.31 65.85L301.55 65.97L300.77 66.00L300.21 64.75L299.61 64.61L299.03 64.39L298.49 64.09L297.23 64.64L296.67 64.11L296.19 63.51L295.78 62.85L296.57 61.74L296.40 61.15L296.30 60.54L296.28 59.92L295.18 59.11L295.36 58.36L295.64 57.64L296.01 56.96L297.37 57.09L297.79 56.64L298.27 56.25L298.80 55.93L298.95 54.57L299.69 54.35L300.45 54.23L301.23 54.20L301.79 55.45L302.39 55.59L302.97 55.81L303.51 56.11L304.77 55.56L305.33 56.09L305.81 56.69L306.22 57.35L305.43 58.46L305.60 59.05L305.70 59.66L305.72 60.28L306.82 61.09z" fill="#f5f5f5" stroke="#f5f5f5" stroke-width="0.8" stroke-linejoin="round"/><circle cx="301" cy="60.1" r="2.9" fill="none" stroke="#8d9298" stroke-width="1.1"/><circle cx="301" cy="60.1" r="1.7" fill="#f5f5f5"/><path d="M396 60.5v-3.2h16v3.2M396 70v3.2h16v-3.2" stroke="#f5f5f5" stroke-width="2" fill="none"/><path d="M394.5 65q10 -7.5 20.5 0q-10 7.5 -20.5 0z" stroke="#f5f5f5" stroke-width="1.9" fill="none"/><circle cx="404.5" cy="65" r="2.6" fill="#f5f5f5"/><path d="M494 58.3l3.5 -3.2v6.4z M514 58.3l-3.5 -3.2v6.4z" fill="#f5f5f5"/><g stroke="#f5f5f5" fill="none"><path d="M502 55v10M505.8 55v10M502 68.5v6M505.8 68.5v6" stroke-width="1.7"/><path d="M494 70.5l7.5 -6.3 5.5 5.3 7 -6" stroke-width="2.6"/><path d="M493.5 74.7h21" stroke-width="2.1"/></g><g stroke="#f5f5f5" stroke-width="3.2" fill="none"><path d="M622.2 63v9.6h9"/><path d="M633.6 67v-8.4h-10"/></g><path d="M617.5 64l5 -6.8 5 6.8z" fill="#f5f5f5"/><path d="M628.8 66.5l4.8 7 4.8 -7z" fill="#f5f5f5"/><path d="M739 57.5h8.5l2 2.5h11.5v14h-22z" fill="#f5f5f5"/><rect x="837.5" y="56.3" width="10.5" height="6.5" fill="none" stroke="#f5f5f5" stroke-width="2"/><rect x="832.5" y="62" width="21" height="12.5" rx="2.5" fill="#f5f5f5"/><path d="M834.5 66.3h17" stroke="#8d9298" stroke-width="1.3"/><rect x="837.5" y="69.6" width="11" height="1.8" fill="#8d9298"/><path d="M1405.2 60.3a8.2 8.2 0 1 0 11.2 0" stroke="#f5f5f5" stroke-width="3" fill="none" stroke-linecap="round"/><path d="M1410.8 55.6v11" stroke="#f5f5f5" stroke-width="3" stroke-linecap="butt"/></g><g font-family='"Liberation Sans", sans-serif'><g fill="none" stroke="#f5f5f5"><circle cx="210.3" cy="785.5" r="8.6" stroke-width="2"/><path d="M199.6 779v14M221 779v14" stroke-width="3.2"/><path d="M203.5 773l1.8 3.2M210.3 771v4M217 773l-1.8 3.2" stroke-width="2"/></g><circle cx="210.3" cy="785.5" r="5.2" fill="#f5f5f5"/><circle cx="213.2" cy="782.6" r="2.4" fill="#4c7399"/><rect x="270.5" y="777" width="15" height="15" fill="#f7f7f7"/><path d="M337 774.5v19l18 -9.5z" fill="#2b618d"/><circle cx="412.6" cy="784.3" r="8.5" fill="#2b618d"/><text x="489.5" y="791" fill="#f7f7f7" font-size="18.9" font-weight="normal" text-anchor="start">00:38:912</text><path d="M601 784l12 -7.5v15z M612.5 784l12 -7.5v15z" fill="#2b618d"/><path d="M673.5 784l12 -7.5v15z" fill="#2b618d"/><rect x="713" y="765" width="467" height="5" fill="#f7f7f7"/><path d="M718.0 779.5v4M720.9 779.5v4M723.8 779.5v4M726.7 779.5v4M729.6 779.5v4M732.5 779.5v4M735.4 779.5v4M738.3 779.5v4M741.2 779.5v4M744.1 779.5v4M747.0 779.5v4M749.9 779.5v4M752.8 779.5v4M755.7 779.5v4M758.6 779.5v4M761.5 779.5v4M764.4 779.5v4M767.3 779.5v4M770.2 779.5v4M773.1 779.5v4M776.0 779.5v4M778.9 779.5v4M781.8 779.5v4M784.7 779.5v4M787.6 779.5v4M790.5 779.5v4M793.4 779.5v4M796.3 779.5v4M799.2 779.5v4M802.1 779.5v4M805.0 779.5v4M807.9 779.5v4M810.8 779.5v4M813.7 779.5v4M816.6 779.5v4M819.5 779.5v4M822.4 779.5v4M825.3 779.5v4M828.2 779.5v4M831.1 779.5v4M834.0 779.5v4M836.9 779.5v4M839.8 779.5v4M842.7 779.5v4M845.6 779.5v4M848.5 779.5v4M851.4 779.5v4M854.3 779.5v4M857.2 779.5v4M860.1 779.5v4M863.0 779.5v4M865.9 779.5v4M868.8 779.5v4M871.7 779.5v4M874.6 779.5v4M877.5 779.5v4M880.4 779.5v4M883.3 779.5v4M886.2 779.5v4M889.1 779.5v4M892.0 779.5v4M894.9 779.5v4M897.8 779.5v4M900.7 779.5v4M903.6 779.5v4M906.5 779.5v4M909.4 779.5v4M912.3 779.5v4M915.2 779.5v4M918.1 779.5v4M921.0 779.5v4M923.9 779.5v4M926.8 779.5v4M929.7 779.5v4M932.6 779.5v4M935.5 779.5v4M938.4 779.5v4M941.3 779.5v4M944.2 779.5v4M947.1 779.5v4M950.0 779.5v4M952.9 779.5v4M955.8 779.5v4M958.7 779.5v4M961.6 779.5v4M964.5 779.5v4M967.4 779.5v4M970.3 779.5v4M973.2 779.5v4M976.1 779.5v4M979.0 779.5v4M981.9 779.5v4M984.8 779.5v4M987.7 779.5v4M990.6 779.5v4M993.5 779.5v4M996.4 779.5v4M999.3 779.5v4M1002.2 779.5v4M1005.1 779.5v4M1008.0 779.5v4M1010.9 779.5v4M1013.8 779.5v4M1016.7 779.5v4M1019.6 779.5v4M1022.5 779.5v4M1025.4 779.5v4M1028.3 779.5v4M1031.2 779.5v4M1034.1 779.5v4M1037.0 779.5v4M1039.9 779.5v4M1042.8 779.5v4M1045.7 779.5v4M1048.6 779.5v4M1051.5 779.5v4M1054.4 779.5v4M1057.3 779.5v4M1060.2 779.5v4M1063.1 779.5v4M1066.0 779.5v4M1068.9 779.5v4M1071.8 779.5v4M1074.7 779.5v4M1077.6 779.5v4M1080.5 779.5v4M1083.4 779.5v4M1086.3 779.5v4M1089.2 779.5v4M1092.1 779.5v4M1095.0 779.5v4M1097.9 779.5v4M1100.8 779.5v4M1103.7 779.5v4M1106.6 779.5v4M1109.5 779.5v4M1112.4 779.5v4M1115.3 779.5v4M1118.2 779.5v4M1121.1 779.5v4M1124.0 779.5v4M1126.9 779.5v4M1129.8 779.5v4M1132.7 779.5v4M1135.6 779.5v4M1138.5 779.5v4M1141.4 779.5v4M1144.3 779.5v4M1147.2 779.5v4M1150.1 779.5v4M1153.0 779.5v4M1155.9 779.5v4M1158.8 779.5v4M1161.7 779.5v4M1164.6 779.5v4M1167.5 779.5v4M1170.4 779.5v4M1173.3 779.5v4" stroke="#d3dce6" stroke-width="1.1"/><path d="M780.5 760h10v12l-5 5.5-5 -5.5z" fill="#f7f7f7"/><path d="M1206 776.5v15l12 -7.5z" fill="#2b618d"/><path d="M1267.5 776.5v15l12 -7.5z M1279 776.5v15l12 -7.5z" fill="#2b618d"/><circle cx="1345.8" cy="784.3" r="17.2" fill="#f7f7f7"/><rect x="1341" y="779.5" width="9.6" height="9.6" fill="#1c4a66"/><path d="M1336 775h8l-8 8z M1355.6 793.6h-8l8 -8z" fill="#1c4a66"/><path d="M1424 777v13M1435 775.5v15" stroke="#74808f" stroke-width="2"/><path d="M1421 790l3 -7 3 7" stroke="#74808f" stroke-width="1.6" fill="none"/><circle cx="1477" cy="781" r="6.3" stroke="#2b618d" stroke-width="2.4" fill="none"/><path d="M1481.5 785.5l7.5 7.5" stroke="#2b618d" stroke-width="3.2" stroke-linecap="round"/></g><g font-family='"Liberation Sans", sans-serif'><g stroke="#e6e6e6" fill="none" stroke-width="2"><path d="M212 830l11 -7 11 7"/><path d="M213.5 831v15M232.5 831v15"/><path d="M217 834h12M217 838.5h12M217 843h12" stroke-width="2.2"/></g><path d="M214 831l9 -6 9 6z" fill="#e6e6e6"/><g fill="#e6e6e6"><rect x="306" y="822.8" width="23.6" height="2.6"/><rect x="306" y="844" width="23.6" height="2.6"/><path d="M313 833.5l5 -5 5 5z M313 835.5l5 5.5 5 -5.5z"/></g><g fill="#e6e6e6"><rect x="401" y="822.8" width="23.4" height="2.6"/><path d="M401.5 827.5h10.5l-5.25 5.5z"/><rect x="401" y="834.8" width="11" height="2.4"/><rect x="401" y="839.3" width="11" height="2.4"/><rect x="401" y="844" width="11" height="2.4"/></g><rect x="477" y="819" width="1.6" height="33.5" fill="#d8d8d8"/><path d="M534 823h13v17l-5 7h-13v-20z" fill="#e6e6e6"/><path d="M545 847l5 -9 5 9z" fill="#e6e6e6" stroke="#6a6a6c" stroke-width="1"/><path d="M533 833h6M533 836.5h8M533 840h5" stroke="#8a8a8a" stroke-width="1"/><path d="M625 832h8v-4l6 7-6 7v-4h-8z" fill="#e6e6e6"/><path d="M637 827h10v3M640 829l5 5.5-5 5.5M637 842.5h10v-3" stroke="#e6e6e6" stroke-width="2.2" fill="none"/><path d="M720 826h8l2 2h14v16h-24z" fill="#e6e6e6"/><path d="M724.5 833l15 8M739.5 833l-15 8" stroke="#7a7a7c" stroke-width="2"/><rect x="724" y="833" width="16" height="8" fill="none" stroke="#7a7a7c" stroke-width="1.5"/><text x="818" y="841" fill="#f2f2f2" font-size="14.7" font-weight="bold" text-anchor="start">2006 Demonstration Tahoe (4WD) Demo</text><rect x="1401.5" y="819" width="1.6" height="33.5" fill="#d8d8d8"/><path d="M1424 849l5 -9h14l5 9z" fill="#9a9a9c"/><circle cx="1436" cy="827" r="3" fill="#9a9a9c"/><path d="M1419.5 851l30 -30" stroke="#f2f2f2" stroke-width="2.2"/><g stroke="#e6e6e6" stroke-width="1.8" fill="none"><path d="M1479 830h28M1490 830l5 -4h5M1493 830l4 3.5h4"/></g><circle cx="1479.5" cy="830" r="2.6" fill="#e6e6e6"/><path d="M1507 830l-4 -2.5v5z" fill="#e6e6e6"/><path d="M1477 850v-5l14 -5 4 -5 3 5h10v10z" fill="#e6e6e6"/></g><g font-family='"Liberation Sans", sans-serif'><circle cx="34.0" cy="67.0" r="28.2" fill="#fdfdfd"/><path d="M32.2 80.8V60.4H25.2V56.3C29.5 56 32.2 54 32.8 51H38.6V80.8Z" fill="#231f20"/><circle cx="68.6" cy="335.0" r="28.2" fill="#fdfdfd"/><text x="68.6" y="350.2" fill="#231f20" font-size="42" font-weight="bold" text-anchor="middle">2</text><circle cx="31.0" cy="692.0" r="28.2" fill="#fdfdfd"/><text x="31" y="707.2" fill="#231f20" font-size="42" font-weight="bold" text-anchor="middle">3</text><circle cx="32.0" cy="783.0" r="28.2" fill="#fdfdfd"/><text x="32" y="796.6" fill="#231f20" font-size="42" font-weight="bold" text-anchor="middle">4</text></g>
</svg>
<div class="a" style="left:177px;top:811px;width:1345px;height:1.5px;background:repeating-linear-gradient(90deg,rgba(15,25,45,.9) 0 2px,rgba(15,25,45,.3) 2px 4px)"></div>
</body></html>
